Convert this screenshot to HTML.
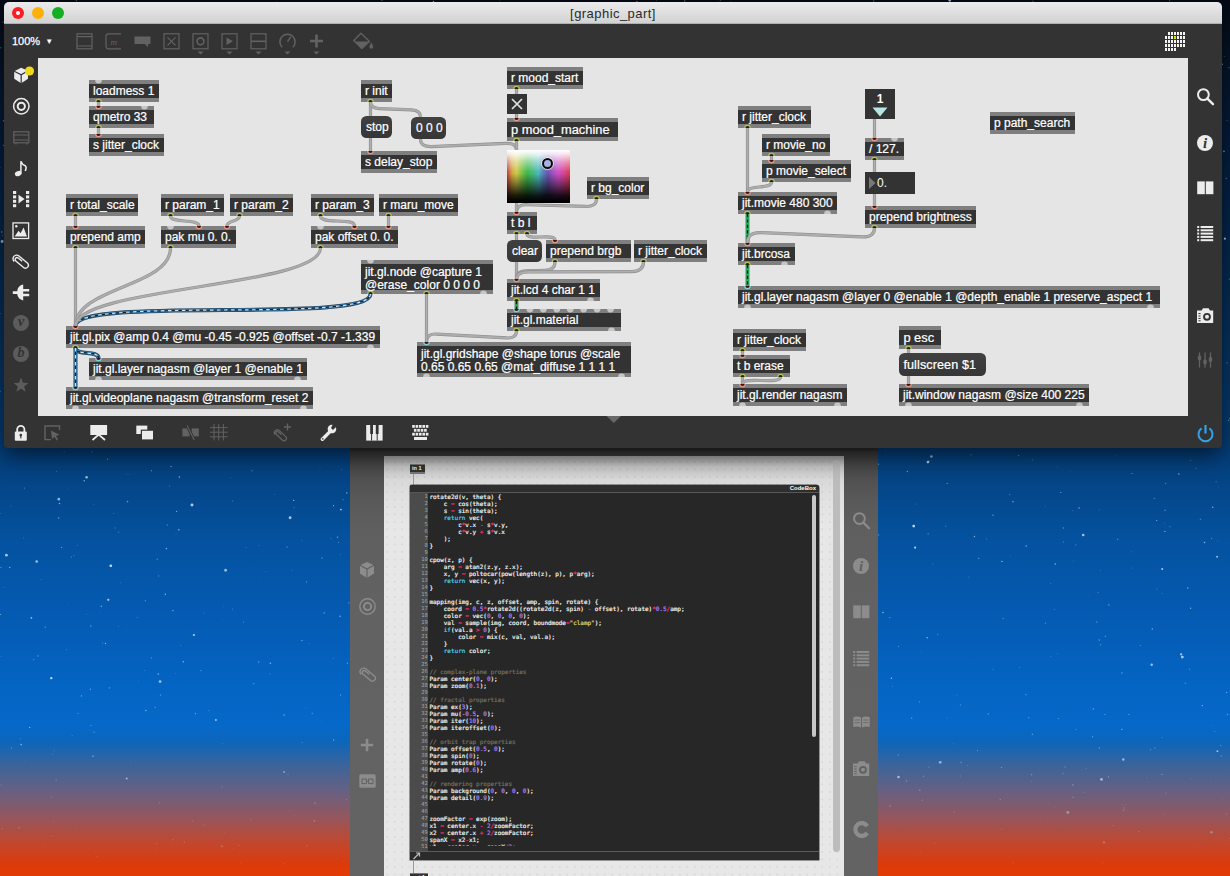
<!DOCTYPE html>
<html lang="en"><head><meta charset="utf-8"><title>[graphic_part]</title>
<style>
html,body{margin:0;padding:0}
body{width:1230px;height:876px;overflow:hidden;position:relative;font-family:"Liberation Sans",sans-serif;font-size:12px;color:#fff;
background:linear-gradient(to bottom,#040a16 0px,#051428 60px,#041d3e 150px,#04284f 260px,#043665 380px,#043d78 448px,#04478a 490px,#0452a0 540px,#0458ac 590px,#045eb8 640px,#0465c4 690px,#0668c8 726px,#0c66ba 742px,#3e6498 767px,#6a6080 793px,#96565c 818px,#c04830 842px,#dc3a0a 865px,#e43a05 876px);}
.abs{position:absolute}
#stars{position:absolute;left:0;top:0}
/* main window */
#win{position:absolute;left:4px;top:2px;width:1218px;height:446px;background:#333;border-radius:5px 5px 4px 4px;box-shadow:0 8px 22px rgba(0,0,0,.55);overflow:hidden}
#title{position:absolute;left:0;top:0;width:100%;height:22px;background:linear-gradient(#ececec,#d2d2d2);border-bottom:1px solid #b0b0b0;box-sizing:border-box;color:#2a2a2a;text-align:center;font-size:13px;line-height:23px;letter-spacing:0.45px}
.tl{position:absolute;top:5px;width:12px;height:12px;border-radius:50%}
#patch{position:absolute;left:34px;top:56px;width:1150px;height:358px;background:#e5e5e5}
#zoom{position:absolute;left:8px;top:22px;height:34px;line-height:34px;font-size:11px;color:#fff;-webkit-text-stroke:0.25px #fff}
/* objects (coordinates are page coords; container offset compensates) */
#layer{position:absolute;left:0;top:0;width:1230px;height:876px;pointer-events:none}
.ob{position:absolute;box-sizing:border-box;background:#333;border-top:4px solid #7f7f7f;border-bottom:4px solid #7f7f7f;color:#fff;font-size:12px;white-space:nowrap}
.ob span{position:absolute;left:4px;top:-1px;line-height:16px;-webkit-text-stroke:0.22px #fff}
.ob.two span{line-height:13.2px;top:1.5px}
.mb{position:absolute;box-sizing:border-box;background:linear-gradient(#414141,#363636);border-radius:5.5px;color:#fff;font-size:12px;white-space:nowrap;overflow:hidden}
.mb span{position:absolute;left:5px;top:3px;line-height:16px;-webkit-text-stroke:0.22px #fff}
/* second window */
#win2{position:absolute;left:350px;top:440px;width:528px;height:440px;background:linear-gradient(#333 0px,#3c3c3c 16px,#464646 24px,#515151 40px,#595959 60px,#5f5f5f 90px,#626262 160px,#636363 440px);overflow:hidden}
#w2band{position:absolute;left:0;top:0;width:528px;height:16px;background:linear-gradient(#2c2c2c 0px,#2d2d2d 11px,#393939 11.5px,#3b3b3b 16px)}
#w2patch{position:absolute;left:34px;top:16px;width:460px;height:424px;background-color:#e7e7e7;background-image:radial-gradient(circle,#d8d8d8 0.6px,rgba(216,216,216,0) 1px);background-size:7.5px 7.5px;background-position:-0.5px 2.2px}
#w2shade{position:absolute;left:0;top:0;width:460px;height:70px;background:linear-gradient(rgba(40,40,40,.36),rgba(60,60,60,.19) 10px,rgba(80,80,80,.09) 24px,rgba(90,90,90,.04) 44px,rgba(100,100,100,0) 70px)}
#w2sb{position:absolute;left:449.3px;top:4px;width:7px;height:392px;border-radius:4px;background:#bcbcbc}
.sm{position:absolute;background:#333;box-sizing:border-box;border-top:1px solid #777;border-bottom:2px solid #777;color:#fff;font-size:5.5px;overflow:hidden}
.sm span{position:absolute;left:2px;top:0;line-height:7px;font-weight:bold}
#cb{position:absolute;left:26px;top:29px;width:409px;height:375px;background:#272727;border-radius:2px 3px 0 0;overflow:hidden;box-shadow:0 0 0 0.5px #444}
#cbh{position:absolute;left:0;top:0;width:409px;height:7px;background:#2e2e2e;border-bottom:1px solid #565656;color:#fff;font-weight:bold;font-size:6px;line-height:7px;text-align:right;padding-right:3px;box-sizing:content-box;width:406px}
#cbg{position:absolute;left:0;top:8px;width:18px;height:359px;background:#4b4b4b}
#cbc{position:absolute;left:0;top:7.6px;width:400px;height:359px;overflow:hidden;font-family:"DejaVu Sans Mono","Liberation Mono",monospace;font-size:5.98px;line-height:7.02px;color:#f8f8f4;font-weight:normal;-webkit-text-stroke:0.18px currentColor}
.cl{white-space:pre;height:7.02px;position:relative;padding-left:19.4px}
.cl b{position:absolute;left:0;width:17.8px;text-align:right;color:#a8a8a8;font-weight:normal;font-size:5.4px;-webkit-text-stroke:0}
.cl i{font-style:normal}
.cl .c{color:#75715e}.cl .s{color:#e6db74}.cl .n{color:#ae81ff}.cl .k{color:#54d4ea}.cl .o{color:#f92672}
#cbs{position:absolute;left:402px;top:10px;width:4px;height:242px;border-radius:2px;background:#c6c6c6}
#cbf{position:absolute;left:0;top:366px;width:409px;height:9px;background:#2b2b2b;border-top:1px solid #5c5c5c;box-sizing:border-box}
#swatch{background:linear-gradient(to right,#c83a3a 0%,#d0a844 8%,#d2c84a 15%,#7cc048 24%,#3fb848 32%,#44ba88 42%,#4fb6c0 50%,#5a7cb8 58%,#6a54b2 65%,#a450c0 73%,#cc50c4 81%,#d84490 91%,#d83a48 100%)}
.cic{width:16px;height:16px;border-radius:50%;background:#5c5c5c;color:#333;font-family:"Liberation Serif",serif;font-style:italic;font-weight:bold;font-size:14px;line-height:14px;text-align:center}
.cic.wi{background:#ececec;color:#333;font-size:15px;line-height:16px}
.cut{display:inline-block;height:2.6px;overflow:hidden;vertical-align:top}

</style></head>
<body>
<svg id="stars" width="1230" height="876" viewBox="0 0 1230 876"><circle cx="113.3" cy="513.4" r="0.38" fill="rgba(205,228,250,0.54)"/><circle cx="128.0" cy="474.4" r="0.37" fill="rgba(205,228,250,0.50)"/><circle cx="24.4" cy="488.1" r="0.72" fill="rgba(205,228,250,0.36)"/><circle cx="78.1" cy="713.5" r="0.61" fill="rgba(205,228,250,0.48)"/><circle cx="341.7" cy="469.6" r="0.48" fill="rgba(205,228,250,0.36)"/><circle cx="41.2" cy="579.6" r="0.43" fill="rgba(205,228,250,0.56)"/><circle cx="223.6" cy="606.4" r="0.38" fill="rgba(205,228,250,0.33)"/><circle cx="72.1" cy="735.8" r="0.49" fill="rgba(205,228,250,0.56)"/><circle cx="158.6" cy="575.9" r="0.66" fill="rgba(205,228,250,0.41)"/><circle cx="201.0" cy="670.6" r="0.68" fill="rgba(205,228,250,0.43)"/><circle cx="343.1" cy="499.6" r="0.69" fill="rgba(205,228,250,0.37)"/><circle cx="171.1" cy="466.5" r="0.69" fill="rgba(205,228,250,0.56)"/><circle cx="306.4" cy="581.8" r="0.62" fill="rgba(205,228,250,0.56)"/><circle cx="159.7" cy="802.8" r="0.56" fill="rgba(205,228,250,0.36)"/><circle cx="21.2" cy="744.6" r="0.80" fill="rgba(205,228,250,0.65)"/><circle cx="99.6" cy="612.0" r="0.36" fill="rgba(205,228,250,0.51)"/><circle cx="58.8" cy="499.2" r="1.36" fill="rgba(205,228,250,0.69)"/><circle cx="86.7" cy="614.2" r="0.39" fill="rgba(205,228,250,0.50)"/><circle cx="192.3" cy="821.0" r="0.74" fill="rgba(205,228,250,0.21)"/><circle cx="145.4" cy="600.7" r="0.78" fill="rgba(205,228,250,0.37)"/><circle cx="61.7" cy="547.4" r="0.57" fill="rgba(205,228,250,0.57)"/><circle cx="92.0" cy="451.7" r="0.52" fill="rgba(205,228,250,0.55)"/><circle cx="333.6" cy="740.0" r="0.63" fill="rgba(205,228,250,0.60)"/><circle cx="18.9" cy="827.8" r="0.74" fill="rgba(205,228,250,0.30)"/><circle cx="137.3" cy="617.6" r="0.64" fill="rgba(205,228,250,0.33)"/><circle cx="23.6" cy="537.7" r="0.50" fill="rgba(205,228,250,0.32)"/><circle cx="0.1" cy="513.5" r="0.51" fill="rgba(205,228,250,0.31)"/><circle cx="306.0" cy="707.9" r="0.46" fill="rgba(205,228,250,0.46)"/><circle cx="127.5" cy="501.6" r="0.80" fill="rgba(205,228,250,0.51)"/><circle cx="169.3" cy="486.1" r="0.50" fill="rgba(205,228,250,0.42)"/><circle cx="290.1" cy="517.8" r="1.47" fill="rgba(205,228,250,0.81)"/><circle cx="51.3" cy="678.1" r="1.22" fill="rgba(205,228,250,0.94)"/><circle cx="302.2" cy="742.4" r="0.52" fill="rgba(205,228,250,0.37)"/><circle cx="270.2" cy="673.7" r="0.50" fill="rgba(205,228,250,0.40)"/><circle cx="284.0" cy="863.7" r="0.71" fill="rgba(205,228,250,0.17)"/><circle cx="259.0" cy="545.2" r="0.51" fill="rgba(205,228,250,0.31)"/><circle cx="9.8" cy="567.4" r="0.66" fill="rgba(205,228,250,0.73)"/><circle cx="156.5" cy="843.5" r="0.78" fill="rgba(205,228,250,0.16)"/><circle cx="77.2" cy="545.3" r="0.44" fill="rgba(205,228,250,0.58)"/><circle cx="315.1" cy="803.0" r="0.64" fill="rgba(205,228,250,0.40)"/><circle cx="29.7" cy="727.4" r="0.70" fill="rgba(205,228,250,0.64)"/><circle cx="167.3" cy="525.0" r="0.50" fill="rgba(205,228,250,0.66)"/><circle cx="340.1" cy="616.3" r="0.78" fill="rgba(205,228,250,0.63)"/><circle cx="59.5" cy="503.4" r="0.76" fill="rgba(205,228,250,0.66)"/><circle cx="51.2" cy="797.1" r="0.65" fill="rgba(205,228,250,0.29)"/><circle cx="192.0" cy="505.0" r="1.48" fill="rgba(205,228,250,0.84)"/><circle cx="184.3" cy="842.1" r="0.74" fill="rgba(205,228,250,0.24)"/><circle cx="73.9" cy="555.8" r="0.46" fill="rgba(205,228,250,0.56)"/><circle cx="90.8" cy="626.0" r="0.76" fill="rgba(205,228,250,0.46)"/><circle cx="160.4" cy="695.0" r="0.54" fill="rgba(205,228,250,0.71)"/><circle cx="175.6" cy="673.4" r="0.36" fill="rgba(205,228,250,0.50)"/><circle cx="64.1" cy="451.7" r="0.43" fill="rgba(205,228,250,0.51)"/><circle cx="253.8" cy="683.7" r="0.58" fill="rgba(205,228,250,0.55)"/><circle cx="274.5" cy="494.6" r="0.46" fill="rgba(205,228,250,0.42)"/><circle cx="270.3" cy="663.2" r="0.69" fill="rgba(205,228,250,0.71)"/><circle cx="155.1" cy="707.3" r="0.58" fill="rgba(205,228,250,0.61)"/><circle cx="158.3" cy="674.0" r="0.77" fill="rgba(205,228,250,0.61)"/><circle cx="306.8" cy="845.7" r="0.60" fill="rgba(205,228,250,0.25)"/><circle cx="294.0" cy="507.6" r="0.55" fill="rgba(205,228,250,0.33)"/><circle cx="84.2" cy="480.7" r="0.70" fill="rgba(205,228,250,0.70)"/><circle cx="54.1" cy="750.8" r="0.41" fill="rgba(205,228,250,0.65)"/><circle cx="338.6" cy="542.2" r="0.53" fill="rgba(205,228,250,0.52)"/><circle cx="346.5" cy="799.6" r="0.54" fill="rgba(205,228,250,0.33)"/><circle cx="118.7" cy="532.2" r="0.67" fill="rgba(205,228,250,0.31)"/><circle cx="193.9" cy="635.0" r="1.10" fill="rgba(205,228,250,0.84)"/><circle cx="179.3" cy="477.0" r="0.70" fill="rgba(205,228,250,0.74)"/><circle cx="36.7" cy="561.5" r="1.37" fill="rgba(205,228,250,0.73)"/><circle cx="45.3" cy="627.3" r="0.72" fill="rgba(205,228,250,0.42)"/><circle cx="52.3" cy="836.1" r="0.67" fill="rgba(205,228,250,0.14)"/><circle cx="20.1" cy="739.0" r="0.38" fill="rgba(205,228,250,0.72)"/><circle cx="222.1" cy="786.7" r="0.74" fill="rgba(205,228,250,0.23)"/><circle cx="302.0" cy="640.6" r="0.60" fill="rgba(205,228,250,0.72)"/><circle cx="93.8" cy="504.3" r="0.46" fill="rgba(205,228,250,0.35)"/><circle cx="56.5" cy="471.2" r="0.49" fill="rgba(205,228,250,0.44)"/><circle cx="265.8" cy="571.8" r="0.43" fill="rgba(205,228,250,0.46)"/><circle cx="6.4" cy="555.2" r="1.34" fill="rgba(205,228,250,0.82)"/><circle cx="66.3" cy="649.4" r="0.40" fill="rgba(205,228,250,0.67)"/><circle cx="151.3" cy="657.9" r="0.53" fill="rgba(205,228,250,0.53)"/><circle cx="240.7" cy="862.6" r="0.72" fill="rgba(205,228,250,0.15)"/><circle cx="222.6" cy="620.0" r="0.37" fill="rgba(205,228,250,0.36)"/><circle cx="24.8" cy="761.2" r="0.42" fill="rgba(205,228,250,0.29)"/><circle cx="294.4" cy="815.6" r="0.48" fill="rgba(205,228,250,0.22)"/><circle cx="102.6" cy="643.0" r="0.55" fill="rgba(205,228,250,0.42)"/><circle cx="336.6" cy="858.5" r="0.46" fill="rgba(205,228,250,0.19)"/><circle cx="108.3" cy="599.8" r="1.13" fill="rgba(205,228,250,0.79)"/><circle cx="176.0" cy="534.4" r="0.35" fill="rgba(205,228,250,0.42)"/><circle cx="31.4" cy="617.8" r="0.91" fill="rgba(205,228,250,0.74)"/><circle cx="81.5" cy="695.9" r="0.69" fill="rgba(205,228,250,0.60)"/><circle cx="250.6" cy="819.2" r="0.50" fill="rgba(205,228,250,0.38)"/><circle cx="52.3" cy="754.1" r="0.37" fill="rgba(205,228,250,0.62)"/><circle cx="312.2" cy="713.5" r="0.72" fill="rgba(205,228,250,0.36)"/><circle cx="183.3" cy="661.8" r="0.71" fill="rgba(205,228,250,0.67)"/><circle cx="204.4" cy="825.0" r="0.66" fill="rgba(205,228,250,0.19)"/><circle cx="10.9" cy="505.9" r="0.40" fill="rgba(205,228,250,0.68)"/><circle cx="195.5" cy="713.7" r="0.66" fill="rgba(205,228,250,0.52)"/><circle cx="1.2" cy="785.0" r="0.58" fill="rgba(205,228,250,0.39)"/><circle cx="230.8" cy="477.7" r="0.46" fill="rgba(205,228,250,0.33)"/><circle cx="92.9" cy="756.3" r="0.68" fill="rgba(205,228,250,0.66)"/><circle cx="172.9" cy="610.7" r="0.66" fill="rgba(205,228,250,0.65)"/><circle cx="215.9" cy="720.0" r="0.99" fill="rgba(205,228,250,0.73)"/><circle cx="260.1" cy="577.9" r="0.36" fill="rgba(205,228,250,0.33)"/><circle cx="94.1" cy="732.2" r="0.65" fill="rgba(205,228,250,0.43)"/><circle cx="180.8" cy="645.2" r="0.40" fill="rgba(205,228,250,0.70)"/><circle cx="69.7" cy="860.8" r="0.36" fill="rgba(205,228,250,0.13)"/><circle cx="287.0" cy="856.6" r="0.47" fill="rgba(205,228,250,0.11)"/><circle cx="331.0" cy="538.5" r="0.41" fill="rgba(205,228,250,0.54)"/><circle cx="333.5" cy="505.7" r="0.58" fill="rgba(205,228,250,0.70)"/><circle cx="246.2" cy="547.2" r="0.57" fill="rgba(205,228,250,0.31)"/><circle cx="1.3" cy="656.5" r="0.49" fill="rgba(205,228,250,0.36)"/><circle cx="120.4" cy="582.8" r="0.35" fill="rgba(205,228,250,0.64)"/><circle cx="293.7" cy="500.4" r="0.67" fill="rgba(205,228,250,0.71)"/><circle cx="101.4" cy="606.3" r="0.80" fill="rgba(205,228,250,0.57)"/><circle cx="126.2" cy="629.8" r="0.37" fill="rgba(205,228,250,0.35)"/><circle cx="292.1" cy="570.0" r="0.46" fill="rgba(205,228,250,0.42)"/><circle cx="178.8" cy="529.7" r="0.78" fill="rgba(205,228,250,0.70)"/><circle cx="284.2" cy="715.0" r="0.77" fill="rgba(205,228,250,0.55)"/><circle cx="251.9" cy="470.8" r="0.55" fill="rgba(205,228,250,0.64)"/><circle cx="225.6" cy="570.2" r="1.46" fill="rgba(205,228,250,0.69)"/><circle cx="165.3" cy="594.3" r="0.68" fill="rgba(205,228,250,0.74)"/><circle cx="91.1" cy="725.5" r="0.60" fill="rgba(205,228,250,0.48)"/><circle cx="58.6" cy="517.9" r="0.76" fill="rgba(205,228,250,0.52)"/><circle cx="77.0" cy="830.6" r="0.55" fill="rgba(205,228,250,0.16)"/><circle cx="67.3" cy="488.1" r="0.39" fill="rgba(205,228,250,0.41)"/><circle cx="90.4" cy="689.2" r="0.69" fill="rgba(205,228,250,0.49)"/><circle cx="144.9" cy="670.2" r="0.50" fill="rgba(205,228,250,0.33)"/><circle cx="97.1" cy="856.4" r="0.58" fill="rgba(205,228,250,0.16)"/><circle cx="302.0" cy="540.7" r="0.46" fill="rgba(205,228,250,0.48)"/><circle cx="156.1" cy="850.7" r="0.74" fill="rgba(205,228,250,0.10)"/><circle cx="11.3" cy="748.0" r="0.56" fill="rgba(205,228,250,0.54)"/><circle cx="0.1" cy="614.4" r="0.72" fill="rgba(205,228,250,0.68)"/><circle cx="340.3" cy="554.4" r="0.42" fill="rgba(205,228,250,0.54)"/><circle cx="238.7" cy="845.4" r="0.64" fill="rgba(205,228,250,0.22)"/><circle cx="160.1" cy="681.6" r="1.37" fill="rgba(205,228,250,0.72)"/><circle cx="322.0" cy="721.1" r="0.41" fill="rgba(205,228,250,0.41)"/><circle cx="222.7" cy="743.4" r="0.38" fill="rgba(205,228,250,0.52)"/><circle cx="204.0" cy="613.0" r="0.62" fill="rgba(205,228,250,0.30)"/><circle cx="105.5" cy="643.5" r="0.64" fill="rgba(205,228,250,0.70)"/><circle cx="166.4" cy="548.6" r="0.78" fill="rgba(205,228,250,0.62)"/><circle cx="107.6" cy="459.2" r="0.65" fill="rgba(205,228,250,0.49)"/><circle cx="90.0" cy="730.3" r="0.45" fill="rgba(205,228,250,0.32)"/><circle cx="118.3" cy="626.6" r="0.44" fill="rgba(205,228,250,0.66)"/><circle cx="258.7" cy="662.0" r="0.79" fill="rgba(205,228,250,0.44)"/><circle cx="287.0" cy="546.9" r="0.69" fill="rgba(205,228,250,0.43)"/><circle cx="333.2" cy="658.2" r="0.45" fill="rgba(205,228,250,0.49)"/><circle cx="232.9" cy="848.5" r="0.53" fill="rgba(205,228,250,0.13)"/><circle cx="340.9" cy="509.6" r="0.94" fill="rgba(205,228,250,0.77)"/><circle cx="314.4" cy="821.1" r="0.80" fill="rgba(205,228,250,0.35)"/><circle cx="115.2" cy="527.9" r="0.69" fill="rgba(205,228,250,0.31)"/><circle cx="232.6" cy="609.0" r="0.50" fill="rgba(205,228,250,0.38)"/><circle cx="1.0" cy="567.5" r="0.78" fill="rgba(205,228,250,0.36)"/><circle cx="337.5" cy="537.1" r="0.72" fill="rgba(205,228,250,0.67)"/><circle cx="151.4" cy="470.7" r="0.52" fill="rgba(205,228,250,0.71)"/><circle cx="67.6" cy="603.0" r="0.36" fill="rgba(205,228,250,0.48)"/><circle cx="284.1" cy="772.0" r="0.92" fill="rgba(205,228,250,0.54)"/><circle cx="322.0" cy="557.9" r="0.75" fill="rgba(205,228,250,0.45)"/><circle cx="95.3" cy="852.2" r="0.47" fill="rgba(205,228,250,0.19)"/><circle cx="110.8" cy="565.8" r="1.35" fill="rgba(205,228,250,0.92)"/><circle cx="221.9" cy="846.2" r="1.04" fill="rgba(205,228,250,0.27)"/><circle cx="334.9" cy="850.6" r="0.46" fill="rgba(205,228,250,0.15)"/><circle cx="172.7" cy="839.8" r="0.71" fill="rgba(205,228,250,0.24)"/><circle cx="288.0" cy="774.6" r="0.50" fill="rgba(205,228,250,0.35)"/><circle cx="126.7" cy="778.5" r="1.02" fill="rgba(205,228,250,0.66)"/><circle cx="86.6" cy="477.2" r="1.23" fill="rgba(205,228,250,0.75)"/><circle cx="343.1" cy="821.1" r="0.47" fill="rgba(205,228,250,0.17)"/><circle cx="33.7" cy="659.4" r="0.55" fill="rgba(205,228,250,0.41)"/><circle cx="145.9" cy="710.5" r="0.69" fill="rgba(205,228,250,0.68)"/><circle cx="232.5" cy="500.9" r="0.48" fill="rgba(205,228,250,0.56)"/><circle cx="130.5" cy="760.0" r="0.46" fill="rgba(205,228,250,0.36)"/><circle cx="53.7" cy="821.4" r="0.50" fill="rgba(205,228,250,0.24)"/><circle cx="347.4" cy="663.1" r="0.71" fill="rgba(205,228,250,0.59)"/><circle cx="346.8" cy="493.0" r="0.72" fill="rgba(205,228,250,0.68)"/><circle cx="320.0" cy="467.0" r="0.40" fill="rgba(205,228,250,0.39)"/><circle cx="340.5" cy="694.9" r="0.52" fill="rgba(205,228,250,0.69)"/><circle cx="157.2" cy="559.2" r="0.78" fill="rgba(205,228,250,0.35)"/><circle cx="208.7" cy="710.4" r="0.52" fill="rgba(205,228,250,0.36)"/><circle cx="71.4" cy="557.1" r="0.64" fill="rgba(205,228,250,0.39)"/><circle cx="4.0" cy="587.4" r="0.43" fill="rgba(205,228,250,0.44)"/><circle cx="71.2" cy="784.0" r="0.38" fill="rgba(205,228,250,0.25)"/><circle cx="138.4" cy="681.1" r="0.39" fill="rgba(205,228,250,0.37)"/><circle cx="243.4" cy="622.1" r="0.49" fill="rgba(205,228,250,0.73)"/><circle cx="109.3" cy="687.9" r="0.54" fill="rgba(205,228,250,0.69)"/><circle cx="348.8" cy="602.8" r="0.68" fill="rgba(205,228,250,0.39)"/><circle cx="2.1" cy="828.7" r="0.72" fill="rgba(205,228,250,0.22)"/><circle cx="309.0" cy="643.6" r="0.36" fill="rgba(205,228,250,0.55)"/><circle cx="224.2" cy="832.1" r="0.63" fill="rgba(205,228,250,0.20)"/><circle cx="176.6" cy="511.3" r="0.58" fill="rgba(205,228,250,0.72)"/><circle cx="38.1" cy="656.0" r="0.79" fill="rgba(205,228,250,0.39)"/><circle cx="44.3" cy="846.1" r="0.57" fill="rgba(205,228,250,0.11)"/><circle cx="324.2" cy="612.9" r="0.63" fill="rgba(205,228,250,0.67)"/><circle cx="56.1" cy="780.0" r="0.53" fill="rgba(205,228,250,0.51)"/><circle cx="1169.9" cy="526.8" r="0.53" fill="rgba(205,228,250,0.53)"/><circle cx="1013.0" cy="501.7" r="0.68" fill="rgba(205,228,250,0.70)"/><circle cx="892.5" cy="686.2" r="0.37" fill="rgba(205,228,250,0.68)"/><circle cx="919.4" cy="701.8" r="0.63" fill="rgba(205,228,250,0.44)"/><circle cx="1025.9" cy="694.7" r="0.65" fill="rgba(205,228,250,0.50)"/><circle cx="1032.3" cy="459.8" r="0.57" fill="rgba(205,228,250,0.41)"/><circle cx="1146.8" cy="777.6" r="0.43" fill="rgba(205,228,250,0.39)"/><circle cx="915.7" cy="504.0" r="0.39" fill="rgba(205,228,250,0.50)"/><circle cx="1057.6" cy="467.1" r="0.39" fill="rgba(205,228,250,0.63)"/><circle cx="1151.7" cy="664.8" r="1.20" fill="rgba(205,228,250,0.76)"/><circle cx="1212.7" cy="507.2" r="0.80" fill="rgba(205,228,250,0.63)"/><circle cx="1164.9" cy="531.4" r="0.57" fill="rgba(205,228,250,0.73)"/><circle cx="1200.4" cy="519.3" r="0.77" fill="rgba(205,228,250,0.33)"/><circle cx="1001.5" cy="767.6" r="0.75" fill="rgba(205,228,250,0.35)"/><circle cx="1165.1" cy="510.3" r="0.76" fill="rgba(205,228,250,0.39)"/><circle cx="970.5" cy="662.5" r="0.37" fill="rgba(205,228,250,0.38)"/><circle cx="934.8" cy="843.3" r="0.75" fill="rgba(205,228,250,0.13)"/><circle cx="1154.3" cy="498.3" r="0.64" fill="rgba(205,228,250,0.46)"/><circle cx="1185.3" cy="683.2" r="0.75" fill="rgba(205,228,250,0.35)"/><circle cx="1227.5" cy="714.5" r="0.71" fill="rgba(205,228,250,0.42)"/><circle cx="1226.7" cy="692.5" r="0.69" fill="rgba(205,228,250,0.50)"/><circle cx="940.2" cy="762.3" r="1.39" fill="rgba(205,228,250,0.62)"/><circle cx="1103.0" cy="863.3" r="0.65" fill="rgba(205,228,250,0.11)"/><circle cx="878.6" cy="464.2" r="0.63" fill="rgba(205,228,250,0.49)"/><circle cx="1058.5" cy="826.1" r="0.45" fill="rgba(205,228,250,0.27)"/><circle cx="885.8" cy="451.1" r="0.40" fill="rgba(205,228,250,0.46)"/><circle cx="956.9" cy="695.1" r="0.44" fill="rgba(205,228,250,0.58)"/><circle cx="1045.2" cy="506.6" r="0.46" fill="rgba(205,228,250,0.37)"/><circle cx="911.7" cy="718.0" r="0.70" fill="rgba(205,228,250,0.48)"/><circle cx="971.0" cy="454.8" r="0.60" fill="rgba(205,228,250,0.46)"/><circle cx="1105.3" cy="636.4" r="0.68" fill="rgba(205,228,250,0.41)"/><circle cx="1196.0" cy="468.5" r="0.53" fill="rgba(205,228,250,0.41)"/><circle cx="898.5" cy="777.1" r="1.23" fill="rgba(205,228,250,0.72)"/><circle cx="928.1" cy="533.8" r="0.58" fill="rgba(205,228,250,0.59)"/><circle cx="1164.3" cy="523.3" r="0.49" fill="rgba(205,228,250,0.32)"/><circle cx="1191.1" cy="778.8" r="0.35" fill="rgba(205,228,250,0.51)"/><circle cx="1140.3" cy="645.4" r="0.55" fill="rgba(205,228,250,0.40)"/><circle cx="915.1" cy="547.6" r="1.10" fill="rgba(205,228,250,0.87)"/><circle cx="1122.7" cy="805.0" r="0.47" fill="rgba(205,228,250,0.33)"/><circle cx="1031.5" cy="781.1" r="0.47" fill="rgba(205,228,250,0.44)"/><circle cx="1217.7" cy="541.1" r="0.36" fill="rgba(205,228,250,0.42)"/><circle cx="961.1" cy="762.4" r="0.69" fill="rgba(205,228,250,0.38)"/><circle cx="1187.8" cy="588.0" r="0.76" fill="rgba(205,228,250,0.58)"/><circle cx="1121.9" cy="729.4" r="0.56" fill="rgba(205,228,250,0.68)"/><circle cx="1123.6" cy="810.2" r="0.68" fill="rgba(205,228,250,0.31)"/><circle cx="986.3" cy="539.0" r="0.39" fill="rgba(205,228,250,0.71)"/><circle cx="928.9" cy="461.3" r="0.77" fill="rgba(205,228,250,0.46)"/><circle cx="927.9" cy="462.1" r="1.32" fill="rgba(205,228,250,0.84)"/><circle cx="1123.3" cy="759.4" r="1.25" fill="rgba(205,228,250,0.67)"/><circle cx="1165.8" cy="794.2" r="0.38" fill="rgba(205,228,250,0.46)"/><circle cx="1199.9" cy="846.6" r="0.44" fill="rgba(205,228,250,0.12)"/><circle cx="890.1" cy="806.0" r="0.64" fill="rgba(205,228,250,0.39)"/><circle cx="1100.3" cy="570.7" r="0.39" fill="rgba(205,228,250,0.64)"/><circle cx="950.2" cy="584.0" r="0.36" fill="rgba(205,228,250,0.42)"/><circle cx="977.5" cy="750.6" r="0.49" fill="rgba(205,228,250,0.69)"/><circle cx="1055.3" cy="807.6" r="0.36" fill="rgba(205,228,250,0.28)"/><circle cx="1031.6" cy="774.7" r="0.67" fill="rgba(205,228,250,0.42)"/><circle cx="954.2" cy="812.1" r="0.72" fill="rgba(205,228,250,0.21)"/><circle cx="878.5" cy="534.9" r="0.79" fill="rgba(205,228,250,0.30)"/><circle cx="1050.8" cy="656.4" r="0.43" fill="rgba(205,228,250,0.52)"/><circle cx="1000.2" cy="799.4" r="0.77" fill="rgba(205,228,250,0.27)"/><circle cx="953.6" cy="743.8" r="0.40" fill="rgba(205,228,250,0.57)"/><circle cx="906.5" cy="780.9" r="0.70" fill="rgba(205,228,250,0.43)"/><circle cx="1003.2" cy="618.5" r="0.75" fill="rgba(205,228,250,0.34)"/><circle cx="1190.7" cy="460.6" r="0.47" fill="rgba(205,228,250,0.71)"/><circle cx="1054.4" cy="609.3" r="0.46" fill="rgba(205,228,250,0.51)"/><circle cx="1065.1" cy="766.9" r="0.64" fill="rgba(205,228,250,0.38)"/><circle cx="993.0" cy="515.2" r="0.65" fill="rgba(205,228,250,0.63)"/><circle cx="937.7" cy="634.3" r="0.61" fill="rgba(205,228,250,0.36)"/><circle cx="1040.6" cy="821.8" r="0.44" fill="rgba(205,228,250,0.21)"/><circle cx="1125.5" cy="804.3" r="0.42" fill="rgba(205,228,250,0.25)"/><circle cx="993.0" cy="669.3" r="0.50" fill="rgba(205,228,250,0.39)"/><circle cx="1221.3" cy="756.1" r="0.78" fill="rgba(205,228,250,0.31)"/><circle cx="1013.2" cy="863.2" r="0.68" fill="rgba(205,228,250,0.12)"/><circle cx="947.1" cy="718.0" r="0.44" fill="rgba(205,228,250,0.47)"/><circle cx="889.9" cy="617.6" r="0.66" fill="rgba(205,228,250,0.53)"/><circle cx="1100.6" cy="644.6" r="0.62" fill="rgba(205,228,250,0.48)"/><circle cx="1138.8" cy="831.4" r="0.61" fill="rgba(205,228,250,0.27)"/><circle cx="1026.2" cy="546.0" r="0.75" fill="rgba(205,228,250,0.65)"/><circle cx="1124.4" cy="808.0" r="0.64" fill="rgba(205,228,250,0.29)"/><circle cx="988.2" cy="713.9" r="0.54" fill="rgba(205,228,250,0.65)"/><circle cx="1129.0" cy="714.4" r="0.54" fill="rgba(205,228,250,0.50)"/><circle cx="1096.8" cy="621.9" r="0.77" fill="rgba(205,228,250,0.38)"/><circle cx="1108.4" cy="776.8" r="0.57" fill="rgba(205,228,250,0.57)"/><circle cx="891.4" cy="678.2" r="0.70" fill="rgba(205,228,250,0.72)"/><circle cx="1060.8" cy="492.5" r="0.59" fill="rgba(205,228,250,0.62)"/><circle cx="1058.3" cy="718.5" r="0.58" fill="rgba(205,228,250,0.48)"/><circle cx="1211.7" cy="538.2" r="0.53" fill="rgba(205,228,250,0.64)"/><circle cx="921.1" cy="863.5" r="0.38" fill="rgba(205,228,250,0.11)"/><circle cx="1018.7" cy="455.6" r="0.54" fill="rgba(205,228,250,0.61)"/><circle cx="1001.9" cy="561.4" r="0.68" fill="rgba(205,228,250,0.72)"/><circle cx="1063.5" cy="541.9" r="0.53" fill="rgba(205,228,250,0.40)"/><circle cx="923.5" cy="776.2" r="0.64" fill="rgba(205,228,250,0.40)"/><circle cx="1075.8" cy="544.9" r="0.51" fill="rgba(205,228,250,0.59)"/><circle cx="1166.2" cy="792.8" r="0.48" fill="rgba(205,228,250,0.37)"/><circle cx="922.1" cy="800.2" r="0.73" fill="rgba(205,228,250,0.26)"/><circle cx="1010.4" cy="556.5" r="0.43" fill="rgba(205,228,250,0.30)"/><circle cx="1132.1" cy="568.1" r="0.49" fill="rgba(205,228,250,0.52)"/><circle cx="1028.8" cy="717.7" r="0.51" fill="rgba(205,228,250,0.72)"/><circle cx="1178.8" cy="474.0" r="0.76" fill="rgba(205,228,250,0.65)"/><circle cx="927.4" cy="799.2" r="0.36" fill="rgba(205,228,250,0.19)"/><circle cx="1213.0" cy="725.5" r="0.40" fill="rgba(205,228,250,0.36)"/><circle cx="960.2" cy="776.0" r="0.42" fill="rgba(205,228,250,0.55)"/><circle cx="1156.7" cy="520.5" r="0.62" fill="rgba(205,228,250,0.65)"/><circle cx="1113.3" cy="825.4" r="0.73" fill="rgba(205,228,250,0.18)"/><circle cx="1121.9" cy="672.9" r="0.55" fill="rgba(205,228,250,0.70)"/><circle cx="1073.4" cy="561.1" r="0.41" fill="rgba(205,228,250,0.52)"/><circle cx="898.6" cy="646.2" r="0.57" fill="rgba(205,228,250,0.52)"/><circle cx="1067.9" cy="812.4" r="1.40" fill="rgba(205,228,250,0.43)"/><circle cx="1076.0" cy="729.4" r="0.52" fill="rgba(205,228,250,0.49)"/><circle cx="1216.1" cy="481.7" r="0.64" fill="rgba(205,228,250,0.31)"/><circle cx="1092.6" cy="736.7" r="0.50" fill="rgba(205,228,250,0.74)"/><circle cx="1057.7" cy="653.6" r="0.37" fill="rgba(205,228,250,0.62)"/><circle cx="1098.1" cy="592.2" r="0.51" fill="rgba(205,228,250,0.51)"/><circle cx="1063.0" cy="773.6" r="0.55" fill="rgba(205,228,250,0.39)"/><circle cx="1073.0" cy="797.2" r="0.72" fill="rgba(205,228,250,0.31)"/><circle cx="1055.3" cy="564.1" r="0.79" fill="rgba(205,228,250,0.59)"/><circle cx="1156.8" cy="589.0" r="0.48" fill="rgba(205,228,250,0.56)"/><circle cx="1101.5" cy="779.4" r="1.33" fill="rgba(205,228,250,0.69)"/><circle cx="1070.0" cy="470.9" r="0.35" fill="rgba(205,228,250,0.39)"/><circle cx="1202.3" cy="705.6" r="0.71" fill="rgba(205,228,250,0.71)"/><circle cx="1093.3" cy="709.0" r="0.66" fill="rgba(205,228,250,0.57)"/><circle cx="1117.7" cy="539.3" r="0.56" fill="rgba(205,228,250,0.64)"/><circle cx="913.7" cy="526.1" r="1.36" fill="rgba(205,228,250,0.92)"/><circle cx="1108.8" cy="604.9" r="0.70" fill="rgba(205,228,250,0.55)"/><circle cx="968.8" cy="576.9" r="0.49" fill="rgba(205,228,250,0.49)"/><circle cx="1103.9" cy="842.2" r="1.24" fill="rgba(205,228,250,0.24)"/><circle cx="919.8" cy="790.3" r="0.76" fill="rgba(205,228,250,0.34)"/><circle cx="883.0" cy="612.6" r="0.77" fill="rgba(205,228,250,0.74)"/><circle cx="1045.4" cy="623.2" r="0.64" fill="rgba(205,228,250,0.40)"/><circle cx="931.4" cy="456.5" r="1.31" fill="rgba(205,228,250,0.69)"/><circle cx="1218.2" cy="487.0" r="0.41" fill="rgba(205,228,250,0.31)"/><circle cx="1131.2" cy="551.8" r="0.43" fill="rgba(205,228,250,0.32)"/><circle cx="1150.5" cy="749.7" r="0.68" fill="rgba(205,228,250,0.32)"/><circle cx="1099.3" cy="747.9" r="0.77" fill="rgba(205,228,250,0.39)"/><circle cx="1217.4" cy="751.2" r="0.91" fill="rgba(205,228,250,0.79)"/><circle cx="1165.7" cy="483.5" r="0.68" fill="rgba(205,228,250,0.37)"/><circle cx="1181.1" cy="654.3" r="1.12" fill="rgba(205,228,250,0.82)"/><circle cx="1032.4" cy="734.3" r="0.71" fill="rgba(205,228,250,0.46)"/><circle cx="1105.0" cy="714.5" r="0.52" fill="rgba(205,228,250,0.65)"/><circle cx="1210.6" cy="779.5" r="0.48" fill="rgba(205,228,250,0.25)"/><circle cx="1220.8" cy="745.4" r="0.50" fill="rgba(205,228,250,0.55)"/><circle cx="1222.1" cy="799.1" r="0.49" fill="rgba(205,228,250,0.31)"/><circle cx="1190.6" cy="608.2" r="0.62" fill="rgba(205,228,250,0.70)"/><circle cx="1162.2" cy="569.0" r="1.06" fill="rgba(205,228,250,0.78)"/><circle cx="1084.5" cy="792.7" r="0.37" fill="rgba(205,228,250,0.45)"/><circle cx="1163.7" cy="814.2" r="0.47" fill="rgba(205,228,250,0.37)"/><circle cx="1162.1" cy="737.5" r="0.51" fill="rgba(205,228,250,0.34)"/><circle cx="1072.9" cy="784.9" r="0.69" fill="rgba(205,228,250,0.52)"/><circle cx="960.4" cy="704.9" r="0.56" fill="rgba(205,228,250,0.39)"/><circle cx="967.7" cy="765.5" r="0.56" fill="rgba(205,228,250,0.29)"/><circle cx="1161.9" cy="774.3" r="0.61" fill="rgba(205,228,250,0.55)"/><circle cx="1189.6" cy="669.2" r="0.62" fill="rgba(205,228,250,0.39)"/><circle cx="945.7" cy="525.9" r="0.51" fill="rgba(205,228,250,0.55)"/><circle cx="1019.7" cy="667.2" r="0.37" fill="rgba(205,228,250,0.75)"/><circle cx="1009.7" cy="494.6" r="0.70" fill="rgba(205,228,250,0.37)"/><circle cx="1088.2" cy="594.9" r="0.36" fill="rgba(205,228,250,0.32)"/><circle cx="1226.6" cy="813.8" r="0.61" fill="rgba(205,228,250,0.23)"/><circle cx="1152.3" cy="628.9" r="0.70" fill="rgba(205,228,250,0.67)"/><circle cx="1217.1" cy="556.7" r="1.02" fill="rgba(205,228,250,0.70)"/><circle cx="907.4" cy="471.4" r="0.74" fill="rgba(205,228,250,0.51)"/><circle cx="1211.4" cy="832.2" r="1.26" fill="rgba(205,228,250,0.33)"/><circle cx="920.2" cy="852.9" r="0.60" fill="rgba(205,228,250,0.17)"/><circle cx="1214.7" cy="731.3" r="0.55" fill="rgba(205,228,250,0.37)"/><circle cx="1218.0" cy="866.5" r="0.37" fill="rgba(205,228,250,0.10)"/><circle cx="1001.9" cy="829.2" r="0.73" fill="rgba(205,228,250,0.14)"/><circle cx="1154.8" cy="748.0" r="0.79" fill="rgba(205,228,250,0.31)"/><circle cx="929.0" cy="767.1" r="0.65" fill="rgba(205,228,250,0.36)"/><circle cx="1086.2" cy="768.3" r="0.50" fill="rgba(205,228,250,0.34)"/><circle cx="921.7" cy="652.2" r="0.46" fill="rgba(205,228,250,0.36)"/><circle cx="1116.5" cy="455.3" r="0.44" fill="rgba(205,228,250,0.32)"/><circle cx="1204.5" cy="542.6" r="0.74" fill="rgba(205,228,250,0.70)"/><circle cx="927.2" cy="637.8" r="0.77" fill="rgba(205,228,250,0.68)"/><circle cx="1099.2" cy="640.0" r="0.72" fill="rgba(205,228,250,0.51)"/><circle cx="1099.1" cy="510.0" r="0.38" fill="rgba(205,228,250,0.62)"/><circle cx="1072.8" cy="510.8" r="0.47" fill="rgba(205,228,250,0.49)"/><circle cx="932.8" cy="563.9" r="0.50" fill="rgba(205,228,250,0.38)"/><circle cx="1050.8" cy="583.6" r="0.40" fill="rgba(205,228,250,0.74)"/><circle cx="898.0" cy="825.9" r="0.45" fill="rgba(205,228,250,0.24)"/><circle cx="978.8" cy="558.3" r="0.51" fill="rgba(205,228,250,0.75)"/><circle cx="1229.3" cy="838.5" r="0.48" fill="rgba(205,228,250,0.27)"/><circle cx="898.2" cy="755.1" r="0.79" fill="rgba(205,228,250,0.28)"/><circle cx="1162.1" cy="593.2" r="0.35" fill="rgba(205,228,250,0.67)"/><circle cx="1063.4" cy="528.0" r="0.76" fill="rgba(205,228,250,0.40)"/><circle cx="1079.1" cy="508.0" r="0.70" fill="rgba(205,228,250,0.62)"/><circle cx="947.2" cy="483.3" r="0.62" fill="rgba(205,228,250,0.52)"/><circle cx="974.4" cy="536.5" r="0.67" fill="rgba(205,228,250,0.67)"/><circle cx="1083.2" cy="535.0" r="1.34" fill="rgba(205,228,250,0.77)"/><circle cx="1132.0" cy="473.3" r="0.50" fill="rgba(205,228,250,0.68)"/><circle cx="1182.3" cy="657.1" r="1.45" fill="rgba(205,228,250,0.79)"/><circle cx="3.5" cy="120.8" r="0.72" fill="rgba(205,228,250,0.47)"/><circle cx="0.7" cy="167.5" r="0.35" fill="rgba(205,228,250,0.53)"/><circle cx="1.8" cy="232.0" r="0.67" fill="rgba(205,228,250,0.67)"/><circle cx="3.5" cy="145.2" r="0.52" fill="rgba(205,228,250,0.64)"/><circle cx="0.2" cy="391.3" r="0.57" fill="rgba(205,228,250,0.53)"/><circle cx="2.1" cy="241.6" r="1.48" fill="rgba(205,228,250,0.72)"/><circle cx="0.7" cy="47.8" r="0.72" fill="rgba(205,228,250,0.31)"/><circle cx="0.4" cy="313.7" r="0.36" fill="rgba(205,228,250,0.57)"/><circle cx="2.3" cy="235.2" r="0.40" fill="rgba(205,228,250,0.69)"/><circle cx="2.9" cy="22.1" r="0.57" fill="rgba(205,228,250,0.53)"/><circle cx="1224.2" cy="56.4" r="0.41" fill="rgba(205,228,250,0.57)"/><circle cx="1228.9" cy="67.7" r="0.69" fill="rgba(205,228,250,0.37)"/><circle cx="1228.6" cy="420.2" r="0.54" fill="rgba(205,228,250,0.68)"/><circle cx="1226.2" cy="178.5" r="0.70" fill="rgba(205,228,250,0.45)"/><circle cx="1223.9" cy="151.4" r="0.79" fill="rgba(205,228,250,0.66)"/><circle cx="1229.3" cy="365.5" r="0.37" fill="rgba(205,228,250,0.53)"/><circle cx="1229.7" cy="418.7" r="0.54" fill="rgba(205,228,250,0.58)"/><circle cx="1224.9" cy="238.7" r="1.16" fill="rgba(205,228,250,0.80)"/><circle cx="1222.2" cy="64.2" r="0.70" fill="rgba(205,228,250,0.72)"/><circle cx="1227.1" cy="362.9" r="0.75" fill="rgba(205,228,250,0.32)"/><circle cx="1227.1" cy="120.5" r="0.47" fill="rgba(205,228,250,0.54)"/><circle cx="1229.4" cy="279.1" r="0.58" fill="rgba(205,228,250,0.50)"/><circle cx="1169.6" cy="0.6" r="0.64" fill="rgba(205,228,250,0.35)"/><circle cx="731.0" cy="1.9" r="0.47" fill="rgba(205,228,250,0.51)"/><circle cx="656.6" cy="0.3" r="0.41" fill="rgba(205,228,250,0.43)"/><circle cx="500.0" cy="0.6" r="0.39" fill="rgba(205,228,250,0.55)"/><circle cx="1032.9" cy="1.2" r="0.64" fill="rgba(205,228,250,0.39)"/><circle cx="873.7" cy="0.9" r="0.63" fill="rgba(205,228,250,0.51)"/><circle cx="381.9" cy="0.5" r="0.58" fill="rgba(205,228,250,0.47)"/><circle cx="720.4" cy="0.0" r="0.74" fill="rgba(205,228,250,0.41)"/><circle cx="684.7" cy="1.0" r="0.79" fill="rgba(205,228,250,0.43)"/><circle cx="949.7" cy="0.3" r="1.42" fill="rgba(205,228,250,0.78)"/><circle cx="76.3" cy="0.8" r="0.68" fill="rgba(205,228,250,0.35)"/><circle cx="277.0" cy="1.9" r="0.42" fill="rgba(205,228,250,0.45)"/><circle cx="433.5" cy="1.4" r="0.73" fill="rgba(205,228,250,0.67)"/><circle cx="636.9" cy="1.5" r="0.69" fill="rgba(205,228,250,0.51)"/></svg>
<div id="win2">
  <div id="w2band"></div>
<svg class="abs" style="left:9.3px;top:120.7px" width="16" height="18" viewBox="0 0 16 18"><path d="M8 1L15 4.2V12.6L8 17L1 12.6V4.2Z" fill="#8c8c8c"/><path d="M1 4.2L8 8L15 4.2M8 8V17" stroke="#616161" stroke-width="1.1" fill="none"/></svg>
<svg class="abs" style="left:7.8px;top:156.5px" width="19" height="19" viewBox="0 0 19 19"><g fill="none" stroke="#8c8c8c"><circle cx="9.5" cy="9.5" r="7.7" stroke-width="1.4"/><circle cx="9.5" cy="9.5" r="3.6" stroke-width="1.9"/></g></svg>
<svg class="abs" style="left:8.5px;top:226.0px" width="18" height="18" viewBox="0 0 18 18"><path d="M10.2 8.3L6.6 4.9A1.9 1.9 0 0 0 3.9 7.6L11.2 14.6A2.9 2.9 0 0 0 15.3 10.5L7.4 2.9A3.6 3.6 0 0 0 2.3 8" fill="none" stroke="#8c8c8c" stroke-width="1.4" transform="rotate(-4 9 9)"/></svg>
<svg class="abs" style="left:10.0px;top:297.7px" width="14" height="14" viewBox="0 0 14 14"><path d="M7 0.8V13.2M0.8 7H13.2" stroke="#8c8c8c" stroke-width="2.6" fill="none"/></svg>
<svg class="abs" style="left:8.5px;top:334.0px" width="17" height="14" viewBox="0 0 17 14"><rect x="0.3" y="0.3" width="16.4" height="13.4" rx="1.5" fill="#8c8c8c"/><path d="M3 5H7.4V9.6H3ZM9.6 5H14V9.6H9.6ZM7.4 7.3H9.6" stroke="#616161" stroke-width="1" fill="none"/></svg>
<svg class="abs" style="left:501.5px;top:70.5px" width="19" height="19" viewBox="0 0 19 19"><circle cx="7.4" cy="7.6" r="5.4" fill="none" stroke="#8c8c8c" stroke-width="1.9"/><path d="M11.4 11.6L17 17.2" stroke="#8c8c8c" stroke-width="2.2" stroke-linecap="round"/></svg>
<div class="abs cic" style="left:503px;top:118px;background:#8c8c8c;color:#616161;font-size:15px;line-height:16px">i</div>
<svg class="abs" style="left:502.5px;top:165.0px" width="17" height="14" viewBox="0 0 17 14"><rect x="0.2" y="0.4" width="7.6" height="12.8" fill="#8c8c8c"/><rect x="8.8" y="0.4" width="7.6" height="12.8" fill="#8c8c8c"/></svg>
<svg class="abs" style="left:502.5px;top:210.5px" width="17" height="16" viewBox="0 0 17 16"><rect x="0.2" y="0.0" width="2" height="2" fill="#8c8c8c"/><rect x="3.6" y="0.0" width="12.6" height="2" fill="#8c8c8c"/><rect x="0.2" y="3.3" width="2" height="2" fill="#8c8c8c"/><rect x="3.6" y="3.3" width="12.6" height="2" fill="#8c8c8c"/><rect x="0.2" y="6.6" width="2" height="2" fill="#8c8c8c"/><rect x="3.6" y="6.6" width="12.6" height="2" fill="#8c8c8c"/><rect x="0.2" y="9.9" width="2" height="2" fill="#8c8c8c"/><rect x="3.6" y="9.9" width="12.6" height="2" fill="#8c8c8c"/><rect x="0.2" y="13.2" width="2" height="2" fill="#8c8c8c"/><rect x="3.6" y="13.2" width="12.6" height="2" fill="#8c8c8c"/></svg>
<svg class="abs" style="left:502.5px;top:276.0px" width="17" height="12" viewBox="0 0 17 12"><path d="M0.3 1.2Q4 -0.3 8 1.6V11.4Q4 9.6 0.3 11Z" fill="#8c8c8c"/><path d="M16.7 1.2Q13 -0.3 9 1.6V11.4Q13 9.6 16.7 11Z" fill="#8c8c8c"/><path d="M1.6 4H6.8M1.6 6.6H6.8M10.2 4H15.4M10.2 6.6H15.4" stroke="#616161" stroke-width="0.7"/></svg>
<svg class="abs" style="left:501.5px;top:318.5px" width="19" height="19" viewBox="0 0 19 19"><path d="M1 4.6H5.6L7 2.2H12.6L14 4.6H17.2V17H1Z" fill="#8c8c8c"/><circle cx="11" cy="10.8" r="3.9" fill="#616161"/><circle cx="11" cy="10.8" r="2" fill="#8c8c8c"/><path d="M2.4 7.6H4.6M2.4 10H4.6M2.4 12.4H4.6M2.4 14.8H4.6" stroke="#616161" stroke-width="1"/></svg>
<svg class="abs" style="left:502.5px;top:381.0px" width="17" height="17" viewBox="0 0 17 17"><path d="M14.2 5.2A6.4 6.4 0 1 0 14.2 11.8" fill="none" stroke="#8c8c8c" stroke-width="4.2"/></svg>
  <div id="w2patch">
    <div id="w2shade"></div>
    <div id="w2sb"></div>
    <div class="sm" style="left:26px;top:8px;width:15px;height:10px"><span>in 1</span></div>
    <div class="abs" style="left:29px;top:18px;width:1px;height:11px;background:#999"></div>
    <div id="cb">
      <div id="cbh">CodeBox</div>
      <div id="cbg"></div>
      <div id="cbc">
<div class="cl"><b>1</b>rotate2d(v, theta) {</div>
<div class="cl"><b>2</b>    c <i class="o">=</i> cos(theta);</div>
<div class="cl"><b>3</b>    s <i class="o">=</i> sin(theta);</div>
<div class="cl"><b>4</b>    <i class="k">return</i> vec(</div>
<div class="cl"><b>5</b>        c<i class="o">*</i>v.x <i class="o">-</i> s<i class="o">*</i>v.y,</div>
<div class="cl"><b>6</b>        c<i class="o">*</i>v.y <i class="o">+</i> s<i class="o">*</i>v.x</div>
<div class="cl"><b>7</b>    );</div>
<div class="cl"><b>8</b>}</div>
<div class="cl"><b>9</b></div>
<div class="cl"><b>10</b>cpow(z, p) {</div>
<div class="cl"><b>11</b>    arg <i class="o">=</i> atan2(z.y, z.x);</div>
<div class="cl"><b>12</b>    x, y <i class="o">=</i> poltocar(pow(length(z), p), p<i class="o">*</i>arg);</div>
<div class="cl"><b>13</b>    <i class="k">return</i> vec(x, y);</div>
<div class="cl"><b>14</b>}</div>
<div class="cl"><b>15</b></div>
<div class="cl"><b>16</b>mapping(img, c, z, offset, amp, spin, rotate) {</div>
<div class="cl"><b>17</b>    coord <i class="o">=</i> <i class="n">0.5</i><i class="o">*</i>rotate2d((rotate2d(z, spin) <i class="o">-</i> offset), rotate)<i class="o">*</i><i class="n">0.5</i><i class="o">/</i>amp;</div>
<div class="cl"><b>18</b>    color <i class="o">=</i> vec(<i class="n">0</i>, <i class="n">0</i>, <i class="n">0</i>, <i class="n">0</i>);</div>
<div class="cl"><b>19</b>    val <i class="o">=</i> sample(img, coord, boundmode<i class="o">=</i><i class="s">&quot;clamp&quot;</i>);</div>
<div class="cl"><b>20</b>    <i class="k">if</i>(val.a <i class="o">&gt;</i> <i class="n">0</i>) {</div>
<div class="cl"><b>21</b>        color <i class="o">=</i> mix(c, val, val.a);</div>
<div class="cl"><b>22</b>    }</div>
<div class="cl"><b>23</b>    <i class="k">return</i> color;</div>
<div class="cl"><b>24</b>}</div>
<div class="cl"><b>25</b></div>
<div class="cl"><b>26</b><i class="c">// complex-plane properties</i></div>
<div class="cl"><b>27</b>Param center(<i class="n">0</i>, <i class="n">0</i>);</div>
<div class="cl"><b>28</b>Param zoom(<i class="n">0.1</i>);</div>
<div class="cl"><b>29</b></div>
<div class="cl"><b>30</b><i class="c">// fractal properties</i></div>
<div class="cl"><b>31</b>Param ex(<i class="n">3</i>);</div>
<div class="cl"><b>32</b>Param mu(<i class="n">-0.5</i>, <i class="n">0</i>);</div>
<div class="cl"><b>33</b>Param iter(<i class="n">10</i>);</div>
<div class="cl"><b>34</b>Param iteroffset(<i class="n">0</i>);</div>
<div class="cl"><b>35</b></div>
<div class="cl"><b>36</b><i class="c">// orbit trap properties</i></div>
<div class="cl"><b>37</b>Param offset(<i class="n">0.5</i>, <i class="n">0</i>);</div>
<div class="cl"><b>38</b>Param spin(<i class="n">0</i>);</div>
<div class="cl"><b>39</b>Param rotate(<i class="n">0</i>);</div>
<div class="cl"><b>40</b>Param amp(<i class="n">0.6</i>);</div>
<div class="cl"><b>41</b></div>
<div class="cl"><b>42</b><i class="c">// rendering properties</i></div>
<div class="cl"><b>43</b>Param background(<i class="n">0</i>, <i class="n">0</i>, <i class="n">0</i>, <i class="n">0</i>);</div>
<div class="cl"><b>44</b>Param detail(<i class="n">0.9</i>);</div>
<div class="cl"><b>45</b></div>
<div class="cl"><b>46</b></div>
<div class="cl"><b>47</b>zoomFactor <i class="o">=</i> exp(zoom);</div>
<div class="cl"><b>48</b>x1 <i class="o">=</i> center.x <i class="o">-</i> <i class="n">2</i><i class="o">/</i>zoomFactor;</div>
<div class="cl"><b>49</b>x2 <i class="o">=</i> center.x <i class="o">+</i> <i class="n">2</i><i class="o">/</i>zoomFactor;</div>
<div class="cl"><b>50</b>spanX <i class="o">=</i> x2<i class="o">-</i>x1;</div>
<div class="cl"><b>51</b><span class="cut">y1 <i class="o">=</i> center.y <i class="o">-</i> spanX<i class="o">/</i><i class="n">2</i>;</span></div>
      </div>
      <div id="cbs"></div>
      <div id="cbf"><svg width="10" height="9" viewBox="0 0 10 9" style="position:absolute;left:2px;top:-1px"><path d="M1.5 8 L7 2.5 M4 2 H7.5 V5.5" stroke="#bbb" stroke-width="1.2" fill="none"/></svg></div>
    </div>
    <div class="abs" style="left:29px;top:404px;width:1px;height:13px;background:#999"></div>
    <div class="sm" style="left:26px;top:417px;width:18px;height:10px"><span>out 1</span></div>
  </div>
</div>

<div id="win">
  <div id="title"><span class="tl" style="left:8px;background:#fc1c25"></span><span class="tl" style="left:28px;background:#fdb10a"></span><span class="tl" style="left:48px;background:#15ae23"></span><span class="abs" style="left:12px;top:9px;width:4px;height:4px;border-radius:50%;background:#fff"></span>[graphic_part]</div>
  <div id="zoom">100%<span style="font-size:8px;position:relative;top:-1px;left:5px;-webkit-text-stroke:0">&#9660;</span></div>
  <div id="patch"></div>
</div>
<div id="layer">
<div class="ob" style="left:89px;top:80px;width:70px;height:22px"><span>loadmess 1</span></div>
<div class="ob" style="left:89px;top:106px;width:65px;height:22px"><span>qmetro 33</span></div>
<div class="ob" style="left:89px;top:134px;width:75px;height:22px"><span>s jitter_clock</span></div>
<div class="ob" style="left:361px;top:80px;width:31px;height:22px"><span>r init</span></div>
<div class="mb" style="left:361px;top:116px;width:31px;height:22px"><span>stop</span></div>
<div class="mb" style="left:411px;top:117px;width:35px;height:22px"><span>0 0 0</span></div>
<div class="ob" style="left:361px;top:151px;width:76px;height:22px"><span>s delay_stop</span></div>
<div class="ob" style="left:507px;top:67px;width:76px;height:22px"><span>r mood_start</span></div>
<div class="ob" style="left:507px;top:118px;width:111px;height:23px"><span style="font-size:12.85px;top:0px">p mood_machine</span></div>
<div class="ob" style="left:587px;top:177px;width:62px;height:22px"><span>r bg_color</span></div>
<div class="ob" style="left:507px;top:212px;width:30px;height:22px"><span>t b l</span></div>
<div class="mb" style="left:507px;top:240px;width:35px;height:22px"><span>clear</span></div>
<div class="ob" style="left:546px;top:240px;width:85px;height:22px"><span>prepend brgb</span></div>
<div class="ob" style="left:634px;top:240px;width:73px;height:22px"><span>r jitter_clock</span></div>
<div class="ob" style="left:507px;top:279px;width:93px;height:22px"><span>jit.lcd 4 char 1 1</span></div>
<div class="ob" style="left:507px;top:309px;width:114px;height:22px"><span>jit.gl.material</span></div>
<div class="ob two" style="left:361px;top:260px;width:132px;height:34px"><span>jit.gl.node @capture 1<br>@erase_color 0 0 0 0</span></div>
<div class="ob two" style="left:417px;top:342px;width:214px;height:35px"><span>jit.gl.gridshape @shape torus @scale<br>0.65 0.65 0.65 @mat_diffuse 1 1 1 1</span></div>
<div class="ob" style="left:66px;top:194px;width:72px;height:22px"><span>r total_scale</span></div>
<div class="ob" style="left:66px;top:226px;width:79px;height:22px"><span>prepend amp</span></div>
<div class="ob" style="left:161px;top:194px;width:63px;height:22px"><span>r param_1</span></div>
<div class="ob" style="left:230px;top:194px;width:63px;height:22px"><span>r param_2</span></div>
<div class="ob" style="left:161px;top:226px;width:75px;height:22px"><span>pak mu 0. 0.</span></div>
<div class="ob" style="left:311px;top:194px;width:63px;height:22px"><span>r param_3</span></div>
<div class="ob" style="left:379px;top:194px;width:79px;height:22px"><span>r maru_move</span></div>
<div class="ob" style="left:311px;top:226px;width:87px;height:22px"><span>pak offset 0. 0.</span></div>
<div class="ob" style="left:66px;top:326px;width:314px;height:22px"><span>jit.gl.pix @amp 0.4 @mu -0.45 -0.925 @offset -0.7 -1.339</span></div>
<div class="ob" style="left:89px;top:358px;width:218px;height:22px"><span>jit.gl.layer nagasm @layer 1 @enable 1</span></div>
<div class="ob" style="left:66px;top:387px;width:247px;height:22px"><span>jit.gl.videoplane nagasm @transform_reset 2</span></div>
<div class="ob" style="left:738px;top:106px;width:73px;height:22px"><span>r jitter_clock</span></div>
<div class="ob" style="left:762px;top:134px;width:68px;height:22px"><span>r movie_no</span></div>
<div class="ob" style="left:762px;top:160px;width:89px;height:22px"><span>p movie_select</span></div>
<div class="ob" style="left:738px;top:192px;width:99px;height:22px"><span>jit.movie 480 300</span></div>
<div class="ob" style="left:738px;top:243px;width:57px;height:22px"><span>jit.brcosa</span></div>
<div class="ob" style="left:738px;top:286px;width:422px;height:22px"><span>jit.gl.layer nagasm @layer 0 @enable 1 @depth_enable 1 preserve_aspect 1</span></div>
<div class="ob" style="left:865px;top:138px;width:39px;height:22px"><span>/ 127.</span></div>
<div class="ob" style="left:865px;top:206px;width:111px;height:22px"><span>prepend brightness</span></div>
<div class="ob" style="left:990px;top:112px;width:85px;height:22px"><span>p path_search</span></div>
<div class="ob" style="left:733px;top:329px;width:73px;height:22px"><span>r jitter_clock</span></div>
<div class="ob" style="left:733px;top:355px;width:57px;height:22px"><span>t b erase</span></div>
<div class="ob" style="left:733px;top:384px;width:114px;height:22px"><span>jit.gl.render nagasm</span></div>
<div class="ob" style="left:899px;top:326px;width:42px;height:23px"><span style="font-size:12.85px;top:0px;left:4.4px">p esc</span></div>
<div class="mb" style="left:899px;top:353px;width:87px;height:23px"><span style="font-size:12.6px;top:3.5px;left:4.4px;letter-spacing:0.1px">fullscreen $1</span></div>
<div class="ob" style="left:899px;top:384px;width:190px;height:22px"><span>jit.window nagasm @size 400 225</span></div>
<!-- toggle -->
<div class="abs" style="left:507px;top:94px;width:20px;height:20px;background:#333"><svg width="20" height="20" viewBox="0 0 20 20" style="position:absolute;left:0;top:0"><path d="M5 5L15 15M15 5L5 15" stroke="#dce6e6" stroke-width="1.7" fill="none"/></svg></div>
<!-- swatch -->
<div class="abs" id="swatch" style="left:507px;top:150px;width:63px;height:53px"><div class="abs" style="left:0;top:0;width:63px;height:53px;background:linear-gradient(to bottom,#fff 0%,rgba(255,255,255,.85) 8%,rgba(255,255,255,.45) 22%,rgba(255,255,255,0) 42%,rgba(0,0,0,0) 44%,rgba(0,0,0,.45) 66%,rgba(0,0,0,.85) 85%,#000 97%)"></div><div class="abs" style="left:34.5px;top:7.5px;width:7px;height:7px;border-radius:50%;border:2.2px solid #0a0a0a;background:#a9b1e2;box-shadow:0 0 0 0.8px rgba(255,255,255,.8)"></div></div>
<!-- midi number -->
<div class="abs" style="left:865px;top:89px;width:30px;height:30px;background:#333"><span class="abs" style="left:0;top:3px;width:30px;text-align:center;font-weight:bold;font-size:12px;line-height:14px">1</span><svg class="abs" style="left:7px;top:18px" width="16" height="10" viewBox="0 0 16 10"><path d="M0.5 0.5H15.5L8 9.5Z" fill="#b5e6e4"/></svg></div>
<!-- flonum -->
<div class="abs" style="left:865px;top:172px;width:50px;height:22px;background:#333"><svg class="abs" style="left:4px;top:5px" width="7" height="12" viewBox="0 0 7 12"><path d="M0 0L6.5 6L0 12Z" fill="#787878"/></svg><span class="abs" style="left:12px;top:3px;line-height:16px">0.</span></div>
<svg class="abs" id="tbhandle" style="left:606px;top:416px" width="16" height="8" viewBox="0 0 16 8"><path d="M0.5 0H15L7.8 7Z" fill="#686868"/></svg>

<svg class="abs" style="left:0;top:0" width="1230" height="876" viewBox="0 0 1230 876" fill="none" stroke-linecap="butt">
<path d="M98.5 102V106" stroke="#8e8e8e" stroke-width="3.2"/><path d="M98.5 102V106" stroke="#adadad" stroke-width="2"/>
<path d="M98.5 128V134" stroke="#8e8e8e" stroke-width="3.2"/><path d="M98.5 128V134" stroke="#adadad" stroke-width="2"/>
<path d="M370.5 102V116" stroke="#8e8e8e" stroke-width="3.2"/><path d="M370.5 102V116" stroke="#adadad" stroke-width="2"/>
<path d="M370.5 102Q370.5 108.20 379.50 108.56L411.50 109.84Q420.5 110.20 420.5 117" stroke="#8e8e8e" stroke-width="3.2"/><path d="M370.5 102Q370.5 108.20 379.50 108.56L411.50 109.84Q420.5 110.20 420.5 117" stroke="#adadad" stroke-width="2"/>
<path d="M370.5 138V151" stroke="#8e8e8e" stroke-width="3.2"/><path d="M370.5 138V151" stroke="#adadad" stroke-width="2"/>
<path d="M420.5 139Q420.5 147.00 431.50 146.54L505.50 143.46Q516.5 143.00 516.5 150" stroke="#8e8e8e" stroke-width="3.2"/><path d="M420.5 139Q420.5 147.00 431.50 146.54L505.50 143.46Q516.5 143.00 516.5 150" stroke="#adadad" stroke-width="2"/>
<path d="M516.5 89V94" stroke="#8e8e8e" stroke-width="3.2"/><path d="M516.5 89V94" stroke="#adadad" stroke-width="2"/>
<path d="M516.5 114V118" stroke="#8e8e8e" stroke-width="3.2"/><path d="M516.5 114V118" stroke="#adadad" stroke-width="2"/>
<path d="M516.5 141V150" stroke="#8e8e8e" stroke-width="3.2"/><path d="M516.5 141V150" stroke="#adadad" stroke-width="2"/>
<path d="M596.5 199Q596.5 206.80 585.50 206.47L527.50 204.73Q516.5 204.40 516.5 212" stroke="#8e8e8e" stroke-width="3.2"/><path d="M596.5 199Q596.5 206.80 585.50 206.47L527.50 204.73Q516.5 204.40 516.5 212" stroke="#adadad" stroke-width="2"/>
<path d="M516.5 203V212" stroke="#8e8e8e" stroke-width="3.2"/><path d="M516.5 203V212" stroke="#adadad" stroke-width="2"/>
<path d="M516.5 234V240" stroke="#8e8e8e" stroke-width="3.2"/><path d="M516.5 234V240" stroke="#adadad" stroke-width="2"/>
<path d="M527 234C527 241 555 233 555 240" stroke="#8e8e8e" stroke-width="3.2"/><path d="M527 234C527 241 555 233 555 240" stroke="#adadad" stroke-width="2"/>
<path d="M516.5 262V279" stroke="#8e8e8e" stroke-width="3.2"/><path d="M516.5 262V279" stroke="#adadad" stroke-width="2"/>
<path d="M555 262Q555 270.00 545.00 270.26L526.50 270.74Q516.5 271.00 516.5 279" stroke="#8e8e8e" stroke-width="3.2"/><path d="M555 262Q555 270.00 545.00 270.26L526.50 270.74Q516.5 271.00 516.5 279" stroke="#adadad" stroke-width="2"/>
<path d="M643.5 262Q643.5 271.50 631.50 271.55L528.50 271.95Q516.5 272.00 516.5 279" stroke="#8e8e8e" stroke-width="3.2"/><path d="M643.5 262Q643.5 271.50 631.50 271.55L528.50 271.95Q516.5 272.00 516.5 279" stroke="#adadad" stroke-width="2"/>
<path d="M516.5 301V309" stroke="#2b7e4c" stroke-width="3.8"/><path d="M516.5 301V309" stroke="#2fae66" stroke-width="2.6"/><path d="M516.5 301V309" stroke="#0a1f12" stroke-width="1.3" stroke-dasharray="3.2 2.2"/>
<path d="M516.5 331Q516.5 338.50 506.50 337.94L436.50 334.06Q426.5 333.50 426.5 342" stroke="#8e8e8e" stroke-width="3.2"/><path d="M516.5 331Q516.5 338.50 506.50 337.94L436.50 334.06Q426.5 333.50 426.5 342" stroke="#adadad" stroke-width="2"/>
<path d="M426.5 294V342" stroke="#8e8e8e" stroke-width="3.2"/><path d="M426.5 294V342" stroke="#adadad" stroke-width="2"/>
<path d="M370.5 294C370.5 324 75.5 296 75.5 326" stroke="#1d4566" stroke-width="4"/><path d="M370.5 294C370.5 324 75.5 296 75.5 326" stroke="#3d7fae" stroke-width="2.6"/><path d="M370.5 294C370.5 324 75.5 296 75.5 326" stroke="#0d1f2e" stroke-width="1.2"/><path d="M370.5 294C370.5 324 75.5 296 75.5 326" stroke="#d4e6f0" stroke-width="1.2" stroke-dasharray="3.5 3.5"/>
<path d="M75.5 216V226" stroke="#8e8e8e" stroke-width="3.2"/><path d="M75.5 216V226" stroke="#adadad" stroke-width="2"/>
<path d="M75.5 248V326" stroke="#8e8e8e" stroke-width="3.2"/><path d="M75.5 248V326" stroke="#adadad" stroke-width="2"/>
<path d="M170.5 216C170.5 224 199 218 199 226" stroke="#8e8e8e" stroke-width="3.2"/><path d="M170.5 216C170.5 224 199 218 199 226" stroke="#adadad" stroke-width="2"/>
<path d="M239.5 216C239.5 222 227 220 227 226" stroke="#8e8e8e" stroke-width="3.2"/><path d="M239.5 216C239.5 222 227 220 227 226" stroke="#adadad" stroke-width="2"/>
<path d="M170.5 248C170.5 287.0 75.5 287.0 75.5 326" stroke="#8e8e8e" stroke-width="3.2"/><path d="M170.5 248C170.5 287.0 75.5 287.0 75.5 326" stroke="#adadad" stroke-width="2"/>
<path d="M320.5 216C320.5 225 354.5 217 354.5 226" stroke="#8e8e8e" stroke-width="3.2"/><path d="M320.5 216C320.5 225 354.5 217 354.5 226" stroke="#adadad" stroke-width="2"/>
<path d="M388.5 216V226" stroke="#8e8e8e" stroke-width="3.2"/><path d="M388.5 216V226" stroke="#adadad" stroke-width="2"/>
<path d="M320.5 248C320.5 287.0 75.5 287.0 75.5 326" stroke="#8e8e8e" stroke-width="3.2"/><path d="M320.5 248C320.5 287.0 75.5 287.0 75.5 326" stroke="#adadad" stroke-width="2"/>
<path d="M75.5 348C75.5 356 98.5 350 98.5 358" stroke="#1d4566" stroke-width="4"/><path d="M75.5 348C75.5 356 98.5 350 98.5 358" stroke="#3d7fae" stroke-width="2.6"/><path d="M75.5 348C75.5 356 98.5 350 98.5 358" stroke="#0d1f2e" stroke-width="1.2"/><path d="M75.5 348C75.5 356 98.5 350 98.5 358" stroke="#d4e6f0" stroke-width="1.2" stroke-dasharray="3.5 3.5"/>
<path d="M75.5 348V387" stroke="#1d4566" stroke-width="4"/><path d="M75.5 348V387" stroke="#3d7fae" stroke-width="2.6"/><path d="M75.5 348V387" stroke="#0d1f2e" stroke-width="1.2"/><path d="M75.5 348V387" stroke="#d4e6f0" stroke-width="1.2" stroke-dasharray="3.5 3.5"/>
<path d="M747.5 128V192" stroke="#8e8e8e" stroke-width="3.2"/><path d="M747.5 128V192" stroke="#adadad" stroke-width="2"/>
<path d="M771.5 156V160" stroke="#8e8e8e" stroke-width="3.2"/><path d="M771.5 156V160" stroke="#adadad" stroke-width="2"/>
<path d="M771.5 182C771.5 190 747.5 184 747.5 192" stroke="#8e8e8e" stroke-width="3.2"/><path d="M771.5 182C771.5 190 747.5 184 747.5 192" stroke="#adadad" stroke-width="2"/>
<path d="M747.5 214V243" stroke="#2b7e4c" stroke-width="3.8"/><path d="M747.5 214V243" stroke="#2fae66" stroke-width="2.6"/><path d="M747.5 214V243" stroke="#0a1f12" stroke-width="1.3" stroke-dasharray="3.2 2.2"/>
<path d="M874.5 228Q874.5 237.50 861.50 236.94L760.50 232.56Q747.5 232.00 747.5 243" stroke="#8e8e8e" stroke-width="3.2"/><path d="M874.5 228Q874.5 237.50 861.50 236.94L760.50 232.56Q747.5 232.00 747.5 243" stroke="#adadad" stroke-width="2"/>
<path d="M747.5 265V286" stroke="#2b7e4c" stroke-width="3.8"/><path d="M747.5 265V286" stroke="#2fae66" stroke-width="2.6"/><path d="M747.5 265V286" stroke="#0a1f12" stroke-width="1.3" stroke-dasharray="3.2 2.2"/>
<path d="M874.5 119V138" stroke="#8e8e8e" stroke-width="3.2"/><path d="M874.5 119V138" stroke="#adadad" stroke-width="2"/>
<path d="M874.5 160V172" stroke="#8e8e8e" stroke-width="3.2"/><path d="M874.5 160V172" stroke="#adadad" stroke-width="2"/>
<path d="M874.5 194V206" stroke="#8e8e8e" stroke-width="3.2"/><path d="M874.5 194V206" stroke="#adadad" stroke-width="2"/>
<path d="M742.5 351V355" stroke="#8e8e8e" stroke-width="3.2"/><path d="M742.5 351V355" stroke="#adadad" stroke-width="2"/>
<path d="M742.5 377V384" stroke="#8e8e8e" stroke-width="3.2"/><path d="M742.5 377V384" stroke="#adadad" stroke-width="2"/>
<path d="M780.5 377C780.5 385 742.5 376 742.5 384" stroke="#8e8e8e" stroke-width="3.2"/><path d="M780.5 377C780.5 385 742.5 376 742.5 384" stroke="#adadad" stroke-width="2"/>
<path d="M908.5 349V353" stroke="#8e8e8e" stroke-width="3.2"/><path d="M908.5 349V353" stroke="#adadad" stroke-width="2"/>
<path d="M908.5 376V384" stroke="#8e8e8e" stroke-width="3.2"/><path d="M908.5 376V384" stroke="#adadad" stroke-width="2"/>
<path d="M95.1 80A3.4 3.4 0 0 0 101.9 80Z" fill="#c6c6c6"/>
<path d="M141.1 106A3.4 3.4 0 0 0 147.9 106Z" fill="#c6c6c6"/>
<path d="M587.1 301A3.4 3.4 0 0 1 593.9 301Z" fill="#c6c6c6"/>
<path d="M608.1 331A3.4 3.4 0 0 1 614.9 331Z" fill="#c6c6c6"/>
<path d="M367.1 260A3.4 3.4 0 0 0 373.9 260Z" fill="#c6c6c6"/>
<path d="M480.1 294A3.4 3.4 0 0 1 486.9 294Z" fill="#c6c6c6"/>
<path d="M423.1 377A3.4 3.4 0 0 1 429.9 377Z" fill="#c6c6c6"/>
<path d="M618.1 377A3.4 3.4 0 0 1 624.9 377Z" fill="#c6c6c6"/>
<path d="M167.1 226A3.4 3.4 0 0 0 173.9 226Z" fill="#c6c6c6"/>
<path d="M317.1 226A3.4 3.4 0 0 0 323.9 226Z" fill="#c6c6c6"/>
<path d="M367.1 348A3.4 3.4 0 0 1 373.9 348Z" fill="#c6c6c6"/>
<path d="M95.1 380A3.4 3.4 0 0 1 101.9 380Z" fill="#c6c6c6"/>
<path d="M294.1 380A3.4 3.4 0 0 1 300.9 380Z" fill="#c6c6c6"/>
<path d="M72.1 409A3.4 3.4 0 0 1 78.9 409Z" fill="#c6c6c6"/>
<path d="M300.1 409A3.4 3.4 0 0 1 306.9 409Z" fill="#c6c6c6"/>
<path d="M824.1 214A3.4 3.4 0 0 1 830.9 214Z" fill="#c6c6c6"/>
<path d="M781.1 265A3.4 3.4 0 0 1 787.9 265Z" fill="#c6c6c6"/>
<path d="M744.1 308A3.4 3.4 0 0 1 750.9 308Z" fill="#c6c6c6"/>
<path d="M1147.1 308A3.4 3.4 0 0 1 1153.9 308Z" fill="#c6c6c6"/>
<path d="M891.1 138A3.4 3.4 0 0 0 897.9 138Z" fill="#c6c6c6"/>
<path d="M739.1 406A3.4 3.4 0 0 1 745.9 406Z" fill="#c6c6c6"/>
<path d="M834.1 406A3.4 3.4 0 0 1 840.9 406Z" fill="#c6c6c6"/>
<path d="M905.1 406A3.4 3.4 0 0 1 911.9 406Z" fill="#c6c6c6"/>
<path d="M1076.1 406A3.4 3.4 0 0 1 1082.9 406Z" fill="#c6c6c6"/>
<path d="M526.53 309A3.4 3.4 0 0 0 533.3299999999999 309Z" fill="#c6c6c6"/>
<path d="M539.96 309A3.4 3.4 0 0 0 546.76 309Z" fill="#c6c6c6"/>
<path d="M553.39 309A3.4 3.4 0 0 0 560.1899999999999 309Z" fill="#c6c6c6"/>
<path d="M566.82 309A3.4 3.4 0 0 0 573.62 309Z" fill="#c6c6c6"/>
<path d="M580.25 309A3.4 3.4 0 0 0 587.05 309Z" fill="#c6c6c6"/>
<path d="M593.6800000000001 309A3.4 3.4 0 0 0 600.48 309Z" fill="#c6c6c6"/>
<path d="M607.11 309A3.4 3.4 0 0 0 613.91 309Z" fill="#c6c6c6"/>
<path d="M95.2 102A3.3 3.3 0 0 1 101.8 102Z" fill="#b5c154"/><path d="M96.4 102A2.1 2.1 0 0 1 100.6 102Z" fill="#22220f"/>
<path d="M95.2 106A3.3 3.3 0 0 0 101.8 106Z" fill="#e29a8a"/><path d="M96.4 106A2.1 2.1 0 0 0 100.6 106Z" fill="#3a1512"/>
<path d="M95.2 128A3.3 3.3 0 0 1 101.8 128Z" fill="#b5c154"/><path d="M96.4 128A2.1 2.1 0 0 1 100.6 128Z" fill="#22220f"/>
<path d="M95.2 134A3.3 3.3 0 0 0 101.8 134Z" fill="#e29a8a"/><path d="M96.4 134A2.1 2.1 0 0 0 100.6 134Z" fill="#3a1512"/>
<path d="M367.2 102A3.3 3.3 0 0 1 373.8 102Z" fill="#b5c154"/><path d="M368.4 102A2.1 2.1 0 0 1 372.6 102Z" fill="#22220f"/>
<path d="M367.2 151A3.3 3.3 0 0 0 373.8 151Z" fill="#e29a8a"/><path d="M368.4 151A2.1 2.1 0 0 0 372.6 151Z" fill="#3a1512"/>
<path d="M513.2 89A3.3 3.3 0 0 1 519.8 89Z" fill="#b5c154"/><path d="M514.4 89A2.1 2.1 0 0 1 518.6 89Z" fill="#22220f"/>
<path d="M513.2 118A3.3 3.3 0 0 0 519.8 118Z" fill="#e29a8a"/><path d="M514.4 118A2.1 2.1 0 0 0 518.6 118Z" fill="#3a1512"/>
<path d="M513.2 141A3.3 3.3 0 0 1 519.8 141Z" fill="#b5c154"/><path d="M514.4 141A2.1 2.1 0 0 1 518.6 141Z" fill="#22220f"/>
<path d="M593.2 199A3.3 3.3 0 0 1 599.8 199Z" fill="#b5c154"/><path d="M594.4 199A2.1 2.1 0 0 1 598.6 199Z" fill="#22220f"/>
<path d="M513.2 212A3.3 3.3 0 0 0 519.8 212Z" fill="#e29a8a"/><path d="M514.4 212A2.1 2.1 0 0 0 518.6 212Z" fill="#3a1512"/>
<path d="M513.2 234A3.3 3.3 0 0 1 519.8 234Z" fill="#b5c154"/><path d="M514.4 234A2.1 2.1 0 0 1 518.6 234Z" fill="#22220f"/>
<path d="M523.7 234A3.3 3.3 0 0 1 530.3 234Z" fill="#b5c154"/><path d="M524.9 234A2.1 2.1 0 0 1 529.1 234Z" fill="#22220f"/>
<path d="M551.7 240A3.3 3.3 0 0 0 558.3 240Z" fill="#e29a8a"/><path d="M552.9 240A2.1 2.1 0 0 0 557.1 240Z" fill="#3a1512"/>
<path d="M513.2 279A3.3 3.3 0 0 0 519.8 279Z" fill="#e29a8a"/><path d="M514.4 279A2.1 2.1 0 0 0 518.6 279Z" fill="#3a1512"/>
<path d="M551.7 262A3.3 3.3 0 0 1 558.3 262Z" fill="#b5c154"/><path d="M552.9 262A2.1 2.1 0 0 1 557.1 262Z" fill="#22220f"/>
<path d="M640.2 262A3.3 3.3 0 0 1 646.8 262Z" fill="#b5c154"/><path d="M641.4 262A2.1 2.1 0 0 1 645.6 262Z" fill="#22220f"/>
<path d="M513.2 301A3.3 3.3 0 0 1 519.8 301Z" fill="#b5c154"/><path d="M514.4 301A2.1 2.1 0 0 1 518.6 301Z" fill="#22220f"/>
<path d="M513.2 309A3.3 3.3 0 0 0 519.8 309Z" fill="#7fd6d6"/><path d="M514.4 309A2.1 2.1 0 0 0 518.6 309Z" fill="#3a1512"/>
<path d="M513.2 331A3.3 3.3 0 0 1 519.8 331Z" fill="#b5c154"/><path d="M514.4 331A2.1 2.1 0 0 1 518.6 331Z" fill="#22220f"/>
<path d="M423.2 342A3.3 3.3 0 0 0 429.8 342Z" fill="#7fd6d6"/><path d="M424.4 342A2.1 2.1 0 0 0 428.6 342Z" fill="#3a1512"/>
<path d="M423.2 294A3.3 3.3 0 0 1 429.8 294Z" fill="#b5c154"/><path d="M424.4 294A2.1 2.1 0 0 1 428.6 294Z" fill="#22220f"/>
<path d="M367.2 294A3.3 3.3 0 0 1 373.8 294Z" fill="#b5c154"/><path d="M368.4 294A2.1 2.1 0 0 1 372.6 294Z" fill="#22220f"/>
<path d="M72.2 326A3.3 3.3 0 0 0 78.8 326Z" fill="#e29a8a"/><path d="M73.4 326A2.1 2.1 0 0 0 77.6 326Z" fill="#3a1512"/>
<path d="M72.2 216A3.3 3.3 0 0 1 78.8 216Z" fill="#b5c154"/><path d="M73.4 216A2.1 2.1 0 0 1 77.6 216Z" fill="#22220f"/>
<path d="M72.2 226A3.3 3.3 0 0 0 78.8 226Z" fill="#e29a8a"/><path d="M73.4 226A2.1 2.1 0 0 0 77.6 226Z" fill="#3a1512"/>
<path d="M72.2 248A3.3 3.3 0 0 1 78.8 248Z" fill="#b5c154"/><path d="M73.4 248A2.1 2.1 0 0 1 77.6 248Z" fill="#22220f"/>
<path d="M167.2 216A3.3 3.3 0 0 1 173.8 216Z" fill="#b5c154"/><path d="M168.4 216A2.1 2.1 0 0 1 172.6 216Z" fill="#22220f"/>
<path d="M195.7 226A3.3 3.3 0 0 0 202.3 226Z" fill="#e29a8a"/><path d="M196.9 226A2.1 2.1 0 0 0 201.1 226Z" fill="#3a1512"/>
<path d="M236.2 216A3.3 3.3 0 0 1 242.8 216Z" fill="#b5c154"/><path d="M237.4 216A2.1 2.1 0 0 1 241.6 216Z" fill="#22220f"/>
<path d="M223.7 226A3.3 3.3 0 0 0 230.3 226Z" fill="#e29a8a"/><path d="M224.9 226A2.1 2.1 0 0 0 229.1 226Z" fill="#3a1512"/>
<path d="M167.2 248A3.3 3.3 0 0 1 173.8 248Z" fill="#b5c154"/><path d="M168.4 248A2.1 2.1 0 0 1 172.6 248Z" fill="#22220f"/>
<path d="M317.2 216A3.3 3.3 0 0 1 323.8 216Z" fill="#b5c154"/><path d="M318.4 216A2.1 2.1 0 0 1 322.6 216Z" fill="#22220f"/>
<path d="M351.2 226A3.3 3.3 0 0 0 357.8 226Z" fill="#e29a8a"/><path d="M352.4 226A2.1 2.1 0 0 0 356.6 226Z" fill="#3a1512"/>
<path d="M385.2 216A3.3 3.3 0 0 1 391.8 216Z" fill="#b5c154"/><path d="M386.4 216A2.1 2.1 0 0 1 390.6 216Z" fill="#22220f"/>
<path d="M385.2 226A3.3 3.3 0 0 0 391.8 226Z" fill="#e29a8a"/><path d="M386.4 226A2.1 2.1 0 0 0 390.6 226Z" fill="#3a1512"/>
<path d="M317.2 248A3.3 3.3 0 0 1 323.8 248Z" fill="#b5c154"/><path d="M318.4 248A2.1 2.1 0 0 1 322.6 248Z" fill="#22220f"/>
<path d="M72.2 348A3.3 3.3 0 0 1 78.8 348Z" fill="#b5c154"/><path d="M73.4 348A2.1 2.1 0 0 1 77.6 348Z" fill="#22220f"/>
<path d="M95.2 358A3.3 3.3 0 0 0 101.8 358Z" fill="#7fd6d6"/><path d="M96.4 358A2.1 2.1 0 0 0 100.6 358Z" fill="#3a1512"/>
<path d="M72.2 387A3.3 3.3 0 0 0 78.8 387Z" fill="#7fd6d6"/><path d="M73.4 387A2.1 2.1 0 0 0 77.6 387Z" fill="#3a1512"/>
<path d="M744.2 128A3.3 3.3 0 0 1 750.8 128Z" fill="#b5c154"/><path d="M745.4 128A2.1 2.1 0 0 1 749.6 128Z" fill="#22220f"/>
<path d="M744.2 192A3.3 3.3 0 0 0 750.8 192Z" fill="#e29a8a"/><path d="M745.4 192A2.1 2.1 0 0 0 749.6 192Z" fill="#3a1512"/>
<path d="M768.2 156A3.3 3.3 0 0 1 774.8 156Z" fill="#b5c154"/><path d="M769.4 156A2.1 2.1 0 0 1 773.6 156Z" fill="#22220f"/>
<path d="M768.2 160A3.3 3.3 0 0 0 774.8 160Z" fill="#e29a8a"/><path d="M769.4 160A2.1 2.1 0 0 0 773.6 160Z" fill="#3a1512"/>
<path d="M768.2 182A3.3 3.3 0 0 1 774.8 182Z" fill="#b5c154"/><path d="M769.4 182A2.1 2.1 0 0 1 773.6 182Z" fill="#22220f"/>
<path d="M744.2 214A3.3 3.3 0 0 1 750.8 214Z" fill="#b5c154"/><path d="M745.4 214A2.1 2.1 0 0 1 749.6 214Z" fill="#22220f"/>
<path d="M744.2 243A3.3 3.3 0 0 0 750.8 243Z" fill="#e29a8a"/><path d="M745.4 243A2.1 2.1 0 0 0 749.6 243Z" fill="#3a1512"/>
<path d="M871.2 228A3.3 3.3 0 0 1 877.8 228Z" fill="#b5c154"/><path d="M872.4 228A2.1 2.1 0 0 1 876.6 228Z" fill="#22220f"/>
<path d="M744.2 265A3.3 3.3 0 0 1 750.8 265Z" fill="#b5c154"/><path d="M745.4 265A2.1 2.1 0 0 1 749.6 265Z" fill="#22220f"/>
<path d="M744.2 286A3.3 3.3 0 0 0 750.8 286Z" fill="#7fd6d6"/><path d="M745.4 286A2.1 2.1 0 0 0 749.6 286Z" fill="#3a1512"/>
<path d="M871.2 138A3.3 3.3 0 0 0 877.8 138Z" fill="#e29a8a"/><path d="M872.4 138A2.1 2.1 0 0 0 876.6 138Z" fill="#3a1512"/>
<path d="M871.2 160A3.3 3.3 0 0 1 877.8 160Z" fill="#b5c154"/><path d="M872.4 160A2.1 2.1 0 0 1 876.6 160Z" fill="#22220f"/>
<path d="M871.2 206A3.3 3.3 0 0 0 877.8 206Z" fill="#e29a8a"/><path d="M872.4 206A2.1 2.1 0 0 0 876.6 206Z" fill="#3a1512"/>
<path d="M739.2 351A3.3 3.3 0 0 1 745.8 351Z" fill="#b5c154"/><path d="M740.4 351A2.1 2.1 0 0 1 744.6 351Z" fill="#22220f"/>
<path d="M739.2 355A3.3 3.3 0 0 0 745.8 355Z" fill="#e29a8a"/><path d="M740.4 355A2.1 2.1 0 0 0 744.6 355Z" fill="#3a1512"/>
<path d="M739.2 377A3.3 3.3 0 0 1 745.8 377Z" fill="#b5c154"/><path d="M740.4 377A2.1 2.1 0 0 1 744.6 377Z" fill="#22220f"/>
<path d="M739.2 384A3.3 3.3 0 0 0 745.8 384Z" fill="#e29a8a"/><path d="M740.4 384A2.1 2.1 0 0 0 744.6 384Z" fill="#3a1512"/>
<path d="M777.2 377A3.3 3.3 0 0 1 783.8 377Z" fill="#b5c154"/><path d="M778.4 377A2.1 2.1 0 0 1 782.6 377Z" fill="#22220f"/>
<path d="M905.2 349A3.3 3.3 0 0 1 911.8 349Z" fill="#b5c154"/><path d="M906.4 349A2.1 2.1 0 0 1 910.6 349Z" fill="#22220f"/>
<path d="M905.2 384A3.3 3.3 0 0 0 911.8 384Z" fill="#e29a8a"/><path d="M906.4 384A2.1 2.1 0 0 0 910.6 384Z" fill="#3a1512"/>
</svg>
<svg class="abs" style="left:76px;top:33px" width="17" height="17" viewBox="0 0 17 17"><g fill="none" stroke="#626262" stroke-width="1.2"><rect x="1" y="0.8" width="15" height="15"/><path d="M1 3.6H16M1 13H16"/></g></svg>
<svg class="abs" style="left:105px;top:33px" width="18" height="17" viewBox="0 0 18 17"><path d="M16 0.8H3.5Q1 0.8 1 3.3V13.3Q1 15.8 3.5 15.8H16" fill="none" stroke="#626262" stroke-width="1.2"/><text x="5.4" y="11.6" font-family="Liberation Serif,serif" font-style="italic" font-size="9" fill="#626262">m</text></svg>
<svg class="abs" style="left:134px;top:36px" width="18" height="12" viewBox="0 0 18 12"><path d="M0.5 0.5H16.5V8H14V11.2L10.8 8H0.5Z" fill="#626262"/></svg>
<svg class="abs" style="left:163px;top:33px" width="17" height="17" viewBox="0 0 17 17"><g fill="none" stroke="#626262" stroke-width="1.2"><rect x="1" y="0.8" width="15" height="15"/><path d="M4.5 4.3L12.5 12.3M12.5 4.3L4.5 12.3"/></g></svg>
<svg class="abs" style="left:192px;top:33px" width="17" height="22" viewBox="0 0 17 22"><g fill="none" stroke="#626262"><rect x="1" y="0.8" width="15" height="15" stroke-width="1.2"/><circle cx="8.5" cy="8.3" r="3.4" stroke-width="1.6"/></g><path d="M5.5 18.5H11.5L8.5 21.5Z" fill="#626262"/></svg>
<svg class="abs" style="left:221px;top:33px" width="17" height="22" viewBox="0 0 17 22"><rect x="1" y="0.8" width="15" height="15" fill="none" stroke="#626262" stroke-width="1.2"/><path d="M5.5 4.5L12 8.3L5.5 12.1Z" fill="#626262"/><path d="M5.5 18.5H11.5L8.5 21.5Z" fill="#626262"/></svg>
<svg class="abs" style="left:250px;top:33px" width="17" height="22" viewBox="0 0 17 22"><g fill="none" stroke="#626262" stroke-width="1.2"><rect x="1" y="0.8" width="15" height="15"/><path d="M1 8.3H16" stroke-width="1.6"/></g><path d="M5.5 18.5H11.5L8.5 21.5Z" fill="#626262"/></svg>
<svg class="abs" style="left:278px;top:32px" width="19" height="23" viewBox="0 0 19 23"><g fill="none" stroke="#626262" stroke-width="1.5"><path d="M4.2 15.3A7.6 7.6 0 1 1 14.8 15.3"/><path d="M9.5 9.8L12.6 4.8" stroke-width="1.4"/></g><path d="M6.5 19.5H12.5L9.5 22.5Z" fill="#626262"/></svg>
<svg class="abs" style="left:309px;top:33px" width="15" height="22" viewBox="0 0 15 22"><path d="M7.5 1.5V14.5M1 8H14" stroke="#626262" stroke-width="2.6" fill="none"/><path d="M4.5 18.5H10.5L7.5 21.5Z" fill="#626262"/></svg>
<svg class="abs" style="left:352px;top:32px" width="22" height="19" viewBox="0 0 22 19"><path d="M9 1.2L17.5 9.5L9.8 16.5L1.8 8.5Z" fill="none" stroke="#626262" stroke-width="1.3"/><path d="M3 9.5H16.8L9.8 16Z" fill="#626262"/><path d="M19.3 10.5Q21.2 13.6 21.2 14.8A1.9 1.9 0 0 1 17.4 14.8Q17.4 13.6 19.3 10.5Z" fill="#626262"/></svg>
<svg class="abs" style="left:1165px;top:32px" width="21" height="20" viewBox="0 0 21 20"><rect x="3" y="0" width="2" height="3" fill="#f4f4f4"/><rect x="6" y="0" width="2" height="3" fill="#f4f4f4"/><rect x="9" y="0" width="2" height="3" fill="#f4f4f4"/><rect x="12" y="0" width="2" height="3" fill="#f4f4f4"/><rect x="15" y="0" width="2" height="3" fill="#f4f4f4"/><rect x="18" y="0" width="2" height="3" fill="#f4f4f4"/><rect x="0" y="4" width="2" height="3" fill="#f4f4f4"/><rect x="3" y="4" width="2" height="3" fill="#f4f4f4"/><rect x="6" y="4" width="2" height="3" fill="#f4f4f4"/><rect x="9" y="4" width="2" height="3" fill="#d7e000"/><rect x="12" y="4" width="2" height="3" fill="#f4f4f4"/><rect x="15" y="4" width="2" height="3" fill="#f4f4f4"/><rect x="18" y="4" width="2" height="3" fill="#f4f4f4"/><rect x="0" y="8" width="2" height="3" fill="#f4f4f4"/><rect x="3" y="8" width="2" height="3" fill="#f4f4f4"/><rect x="6" y="8" width="2" height="3" fill="#f4f4f4"/><rect x="9" y="8" width="2" height="3" fill="#f4f4f4"/><rect x="12" y="8" width="2" height="3" fill="#f4f4f4"/><rect x="15" y="8" width="2" height="3" fill="#f4f4f4"/><rect x="18" y="8" width="2" height="3" fill="#f4f4f4"/><rect x="0" y="12" width="2" height="3" fill="#f4f4f4"/><rect x="3" y="12" width="2" height="3" fill="#f4f4f4"/><rect x="6" y="12" width="2" height="3" fill="#f4f4f4"/><rect x="9" y="12" width="2" height="3" fill="#f4f4f4"/><rect x="12" y="12" width="2" height="3" fill="#f4f4f4"/><rect x="15" y="12" width="2" height="3" fill="#f4f4f4"/><rect x="18" y="12" width="2" height="3" fill="#f4f4f4"/><rect x="0" y="16" width="2" height="3" fill="#f4f4f4"/><rect x="3" y="16" width="2" height="3" fill="#f4f4f4"/><rect x="6" y="16" width="2" height="3" fill="#f4f4f4"/><rect x="9" y="16" width="2" height="3" fill="#f4f4f4"/></svg>
<svg class="abs" style="left:13px;top:66px" width="24" height="20" viewBox="0 0 24 20"><path d="M8.2 1.8L15 4.8V12.8L8.2 17.3L1.2 12.8V5.2Z" fill="#ebebf0"/><path d="M1.2 5.2L8.2 8.8L15 4.8M8.2 8.8V17.3" stroke="#333" stroke-width="1.2" fill="none"/><circle cx="16.5" cy="5" r="4.6" fill="#f0d918"/></svg>
<svg class="abs" style="left:12px;top:97px" width="19" height="19" viewBox="0 0 19 19"><g fill="none" stroke="#ececec"><circle cx="9.3" cy="9.3" r="7.7" stroke-width="1.5"/><circle cx="9.3" cy="9.3" r="3.6" stroke-width="2"/></g></svg>
<svg class="abs" style="left:13px;top:131px" width="17" height="14" viewBox="0 0 17 14"><g fill="none" stroke="#626262" stroke-width="1.2"><rect x="0.8" y="0.8" width="15" height="11"/><path d="M0.8 4H15.8M0.8 9H15.8M3 12V13.5M13.6 12V13.5"/></g></svg>
<svg class="abs" style="left:14px;top:160px" width="14" height="18" viewBox="0 0 14 18"><ellipse cx="4.2" cy="13.6" rx="3.4" ry="2.5" transform="rotate(-20 4.2 13.6)" fill="#ececec"/><path d="M6.9 13.5V1.2Q8 4.5 11.3 5.8Q13 7.5 11.2 11" stroke="#ececec" stroke-width="1.5" fill="none"/></svg>
<svg class="abs" style="left:13px;top:191px" width="17" height="17" viewBox="0 0 17 17"><rect x="0" y="0.0" width="3.2" height="3" fill="#ececec"/><rect x="13" y="0.0" width="3.2" height="3" fill="#ececec"/><rect x="0" y="4.4" width="3.2" height="3" fill="#ececec"/><rect x="13" y="4.4" width="3.2" height="3" fill="#ececec"/><rect x="0" y="8.8" width="3.2" height="3" fill="#ececec"/><rect x="13" y="8.8" width="3.2" height="3" fill="#ececec"/><rect x="0" y="13.200000000000001" width="3.2" height="3" fill="#ececec"/><rect x="13" y="13.200000000000001" width="3.2" height="3" fill="#ececec"/><path d="M5.5 3.8L11.6 8.1L5.5 12.4Z" fill="#ececec"/></svg>
<svg class="abs" style="left:12px;top:222px" width="18" height="18" viewBox="0 0 18 18"><rect x="1" y="0.9" width="15.6" height="15.6" fill="none" stroke="#ececec" stroke-width="1.3"/><path d="M2.6 14.6L6.6 8.8L8.6 11.2L11.6 5.6L15 14.6Z" fill="#ececec"/><circle cx="4.3" cy="4.2" r="1.2" fill="#ececec"/></svg>
<svg class="abs" style="left:12px;top:253px" width="18" height="18" viewBox="0 0 18 18"><path d="M10.2 8.3L6.6 4.9A1.9 1.9 0 0 0 3.9 7.6L11.2 14.6A2.9 2.9 0 0 0 15.3 10.5L7.4 2.9A3.6 3.6 0 0 0 2.3 8" fill="none" stroke="#ececec" stroke-width="1.4" transform="rotate(-4 9 9)"/></svg>
<svg class="abs" style="left:12px;top:283px" width="19" height="19" viewBox="0 0 19 19"><path d="M0.8 8.2H5.2Q5.8 2.6 11.2 1.6V6H17.2V8.4H11.2V10.8H17.2V13.2H11.2V17.4Q5.8 16.4 5.2 11H0.8Z" fill="#ececec"/></svg>
<div class="abs cic" style="left:13px;top:315px">v</div>
<div class="abs cic" style="left:13px;top:346px">b</div>
<svg class="abs" style="left:13px;top:377px" width="16" height="16" viewBox="0 0 16 16"><polygon points="8.00,0.60 9.94,5.73 15.42,5.99 11.14,9.42 12.58,14.71 8.00,11.70 3.42,14.71 4.86,9.42 0.58,5.99 6.06,5.73" fill="#5c5c5c"/></svg>
<svg class="abs" style="left:14px;top:424px" width="14" height="18" viewBox="0 0 14 18"><path d="M3.2 8V5.4A3.6 3.6 0 0 1 10.4 5.4V8" fill="none" stroke="#ececec" stroke-width="1.8"/><rect x="0.8" y="7.4" width="12" height="9.4" rx="1" fill="#ececec"/><circle cx="6.8" cy="11" r="1.3" fill="#333"/><rect x="6.2" y="11" width="1.2" height="3.4" fill="#333"/></svg>
<svg class="abs" style="left:44px;top:425px" width="18" height="17" viewBox="0 0 18 17"><path d="M15.5 5V1H1V14.6H7" fill="none" stroke="#626262" stroke-width="1.4"/><path d="M7 5.5L15.5 9.8L12 11L14 14.8L12.6 15.6L10.6 11.8L8 14Z" fill="#626262"/></svg>
<svg class="abs" style="left:90px;top:425px" width="18" height="16" viewBox="0 0 18 16"><rect x="0.3" y="0" width="16.8" height="10" fill="#ececec"/><path d="M2.5 15L8.7 9.6L15 15" fill="none" stroke="#ececec" stroke-width="1.8"/></svg>
<svg class="abs" style="left:136px;top:425px" width="18" height="15" viewBox="0 0 18 15"><rect x="0.3" y="0.6" width="11" height="8.4" fill="#ececec"/><rect x="4.8" y="4.6" width="12.2" height="10" fill="#333"/><rect x="6" y="5.8" width="11" height="8.6" fill="#ececec"/></svg>
<svg class="abs" style="left:182px;top:425px" width="18" height="16" viewBox="0 0 18 16"><rect x="0.4" y="3.4" width="7.2" height="8" fill="#626262"/><rect x="9.6" y="3.4" width="7.2" height="8" fill="#626262"/><path d="M5 0.5L12.4 15.3" stroke="#333" stroke-width="3"/><path d="M5 0.5L12.4 15.3" stroke="#626262" stroke-width="1.1"/></svg>
<svg class="abs" style="left:210px;top:424px" width="18" height="17" viewBox="0 0 18 17"><path d="M4 0V16.4M8.7 0V16.4M13.4 0V16.4M0 3.6H17.6M0 8.2H17.6M0 12.8H17.6" stroke="#626262" stroke-width="1" fill="none"/></svg>
<svg class="abs" style="left:273px;top:423px" width="19" height="19" viewBox="0 0 19 19"><path d="M8.3 8.6L5.6 6A1.6 1.6 0 0 0 3.3 8.3L9.3 14A2.4 2.4 0 0 0 12.7 10.6L6.2 4.4A3 3 0 0 0 2 8.6" fill="none" stroke="#626262" stroke-width="1.3" transform="translate(0,3)"/><path d="M14.5 0.5V7.5M11 4H18" stroke="#626262" stroke-width="1.4"/></svg>
<svg class="abs" style="left:320px;top:424px" width="18" height="18" viewBox="0 0 18 18"><path d="M2.4 15.2L10.2 7.4" stroke="#ececec" stroke-width="3.4" stroke-linecap="round"/><path d="M15.8 3.2A4.3 4.3 0 1 1 12.6 0.8L11 4L13 6L15.8 3.2Z" fill="#ececec"/><circle cx="2.8" cy="14.9" r="0.8" fill="#333"/></svg>
<svg class="abs" style="left:366px;top:425px" width="17" height="16" viewBox="0 0 17 16"><rect x="0.2" y="0" width="16.4" height="15.6" fill="#ececec"/><path d="M5.6 0V15.6M11.2 0V15.6" stroke="#333" stroke-width="1"/><rect x="4.2" y="0" width="2.8" height="9" fill="#333"/><rect x="9.8" y="0" width="2.8" height="9" fill="#333"/></svg>
<svg class="abs" style="left:412px;top:425px" width="18" height="16" viewBox="0 0 18 16"><rect x="0.2" y="0.0" width="2.6" height="2.8" fill="#ececec"/><rect x="3.6" y="0.0" width="2.6" height="2.8" fill="#ececec"/><rect x="7.0" y="0.0" width="2.6" height="2.8" fill="#ececec"/><rect x="10.4" y="0.0" width="2.6" height="2.8" fill="#ececec"/><rect x="13.8" y="0.0" width="2.6" height="2.8" fill="#ececec"/><rect x="1.9" y="3.9" width="2.6" height="2.8" fill="#ececec"/><rect x="5.3" y="3.9" width="2.6" height="2.8" fill="#ececec"/><rect x="8.7" y="3.9" width="2.6" height="2.8" fill="#ececec"/><rect x="12.1" y="3.9" width="2.6" height="2.8" fill="#ececec"/><rect x="0.2" y="7.8" width="2.6" height="2.8" fill="#ececec"/><rect x="3.6" y="7.8" width="2.6" height="2.8" fill="#ececec"/><rect x="7.0" y="7.8" width="2.6" height="2.8" fill="#ececec"/><rect x="10.4" y="7.8" width="2.6" height="2.8" fill="#ececec"/><rect x="13.8" y="7.8" width="2.6" height="2.8" fill="#ececec"/><rect x="2" y="12" width="13" height="3" fill="#ececec"/></svg>
<svg class="abs" style="left:1196px;top:87px" width="19" height="19" viewBox="0 0 19 19"><circle cx="7.4" cy="7.6" r="5.4" fill="none" stroke="#ececec" stroke-width="2"/><path d="M11.4 11.6L17 17.2" stroke="#ececec" stroke-width="2.4" stroke-linecap="round"/></svg>
<div class="abs cic wi" style="left:1197px;top:135px">i</div>
<svg class="abs" style="left:1197px;top:181px" width="17" height="14" viewBox="0 0 17 14"><rect x="0.2" y="0.4" width="7.6" height="12.8" fill="#ececec"/><rect x="8.8" y="0.4" width="7.6" height="12.8" fill="#ececec"/></svg>
<svg class="abs" style="left:1197px;top:226px" width="17" height="16" viewBox="0 0 17 16"><rect x="0.2" y="0.0" width="2" height="2" fill="#ececec"/><rect x="3.6" y="0.0" width="12.6" height="2" fill="#ececec"/><rect x="0.2" y="3.3" width="2" height="2" fill="#ececec"/><rect x="3.6" y="3.3" width="12.6" height="2" fill="#ececec"/><rect x="0.2" y="6.6" width="2" height="2" fill="#ececec"/><rect x="3.6" y="6.6" width="12.6" height="2" fill="#ececec"/><rect x="0.2" y="9.9" width="2" height="2" fill="#ececec"/><rect x="3.6" y="9.9" width="12.6" height="2" fill="#ececec"/><rect x="0.2" y="13.2" width="2" height="2" fill="#ececec"/><rect x="3.6" y="13.2" width="12.6" height="2" fill="#ececec"/></svg>
<svg class="abs" style="left:1196px;top:306px" width="19" height="19" viewBox="0 0 19 19"><path d="M1 4.6H5.6L7 2.2H12.6L14 4.6H17.2V17H1Z" fill="#ececec"/><circle cx="11" cy="10.8" r="3.9" fill="#333"/><circle cx="11" cy="10.8" r="2" fill="#ececec"/><path d="M2.4 7.6H4.6M2.4 10H4.6M2.4 12.4H4.6M2.4 14.8H4.6" stroke="#333" stroke-width="1"/></svg>
<svg class="abs" style="left:1197px;top:352px" width="17" height="16" viewBox="0 0 17 16"><path d="M2.5 0.5V15.5" stroke="#626262" stroke-width="1.3"/><rect x="0.8" y="3.6" width="3.4" height="4.8" rx="1.4" fill="#626262"/><path d="M8 0.5V15.5" stroke="#626262" stroke-width="1.3"/><rect x="6.3" y="7.6" width="3.4" height="4.8" rx="1.4" fill="#626262"/><path d="M13.5 0.5V15.5" stroke="#626262" stroke-width="1.3"/><rect x="11.8" y="5.1" width="3.4" height="4.8" rx="1.4" fill="#626262"/></svg>
<svg class="abs" style="left:1196px;top:424px" width="19" height="19" viewBox="0 0 19 19"><path d="M5.6 4.4A7 7 0 1 0 13.4 4.4" fill="none" stroke="#2fa2ea" stroke-width="2"/><path d="M9.5 1V9.6" stroke="#2fa2ea" stroke-width="2.2"/></svg>
</div>

</body></html>
